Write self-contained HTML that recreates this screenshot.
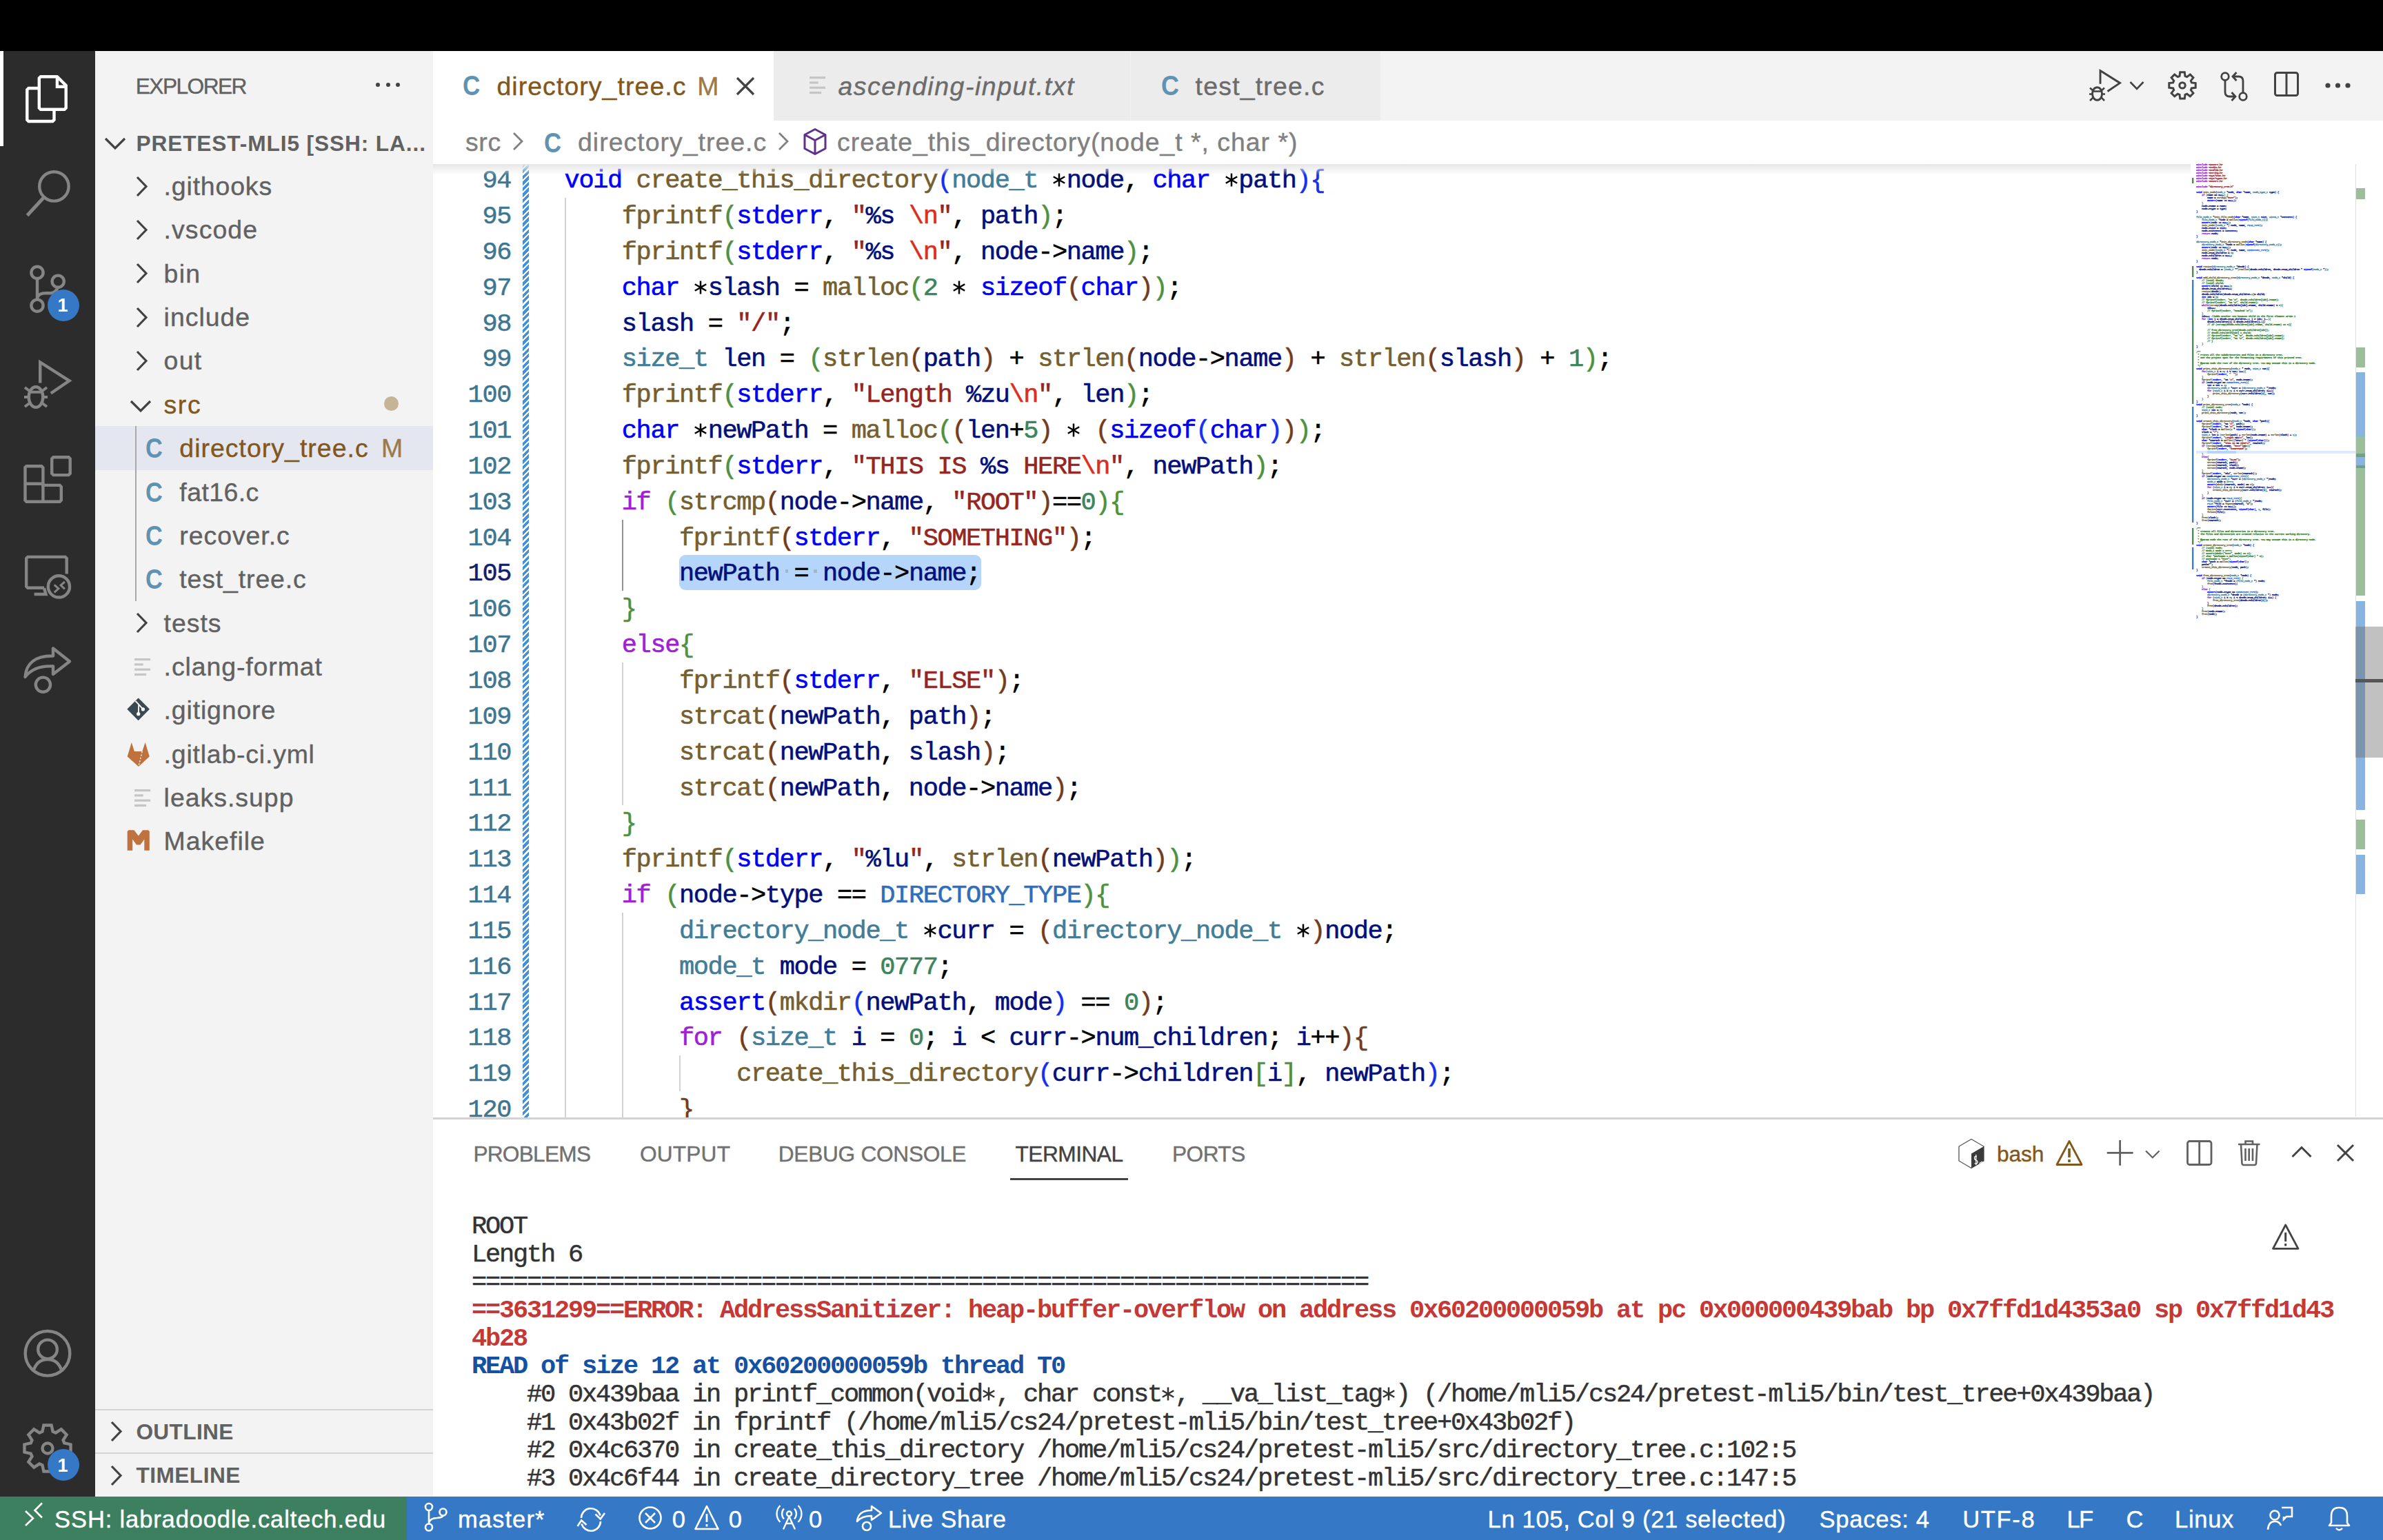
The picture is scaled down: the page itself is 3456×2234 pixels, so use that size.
<!DOCTYPE html><html><head><meta charset="utf-8"><style>html,body{margin:0;padding:0;width:3456px;height:2234px;overflow:hidden;background:#fff;position:relative}</style></head><body><div style="position:absolute;left:0.00px;top:0.00px;width:3456.00px;height:74.00px;background:#000;"></div><div style="position:absolute;left:0.00px;top:74.00px;width:138.00px;height:2097.00px;background:#2c2c2c;"></div><div style="position:absolute;left:0.00px;top:74.00px;width:5.00px;height:138.00px;background:#fff;"></div><div style="position:absolute;left:138.00px;top:74.00px;width:490.00px;height:2097.00px;background:#f3f3f3;"></div><div style="position:absolute;left:628.00px;top:74.00px;width:2828.00px;height:101.00px;background:#f3f3f3;"></div><div style="position:absolute;left:628.00px;top:175.00px;width:2828.00px;height:1447.00px;background:#fff;"></div><div style="position:absolute;left:628.00px;top:1622.00px;width:2828.00px;height:549.00px;background:#fff;"></div><div style="position:absolute;left:628.00px;top:1621.00px;width:2828.00px;height:3.00px;background:#d3d3d3;"></div><div style="position:absolute;left:0.00px;top:2171.00px;width:3456.00px;height:63.00px;background:#3478c6;"></div><div style="position:absolute;left:0.00px;top:2171.00px;width:590.00px;height:63.00px;background:#3d8060;"></div><div style="position:absolute;left:628px;top:238px;width:2828px;height:1383px;overflow:hidden"><div style="position:absolute;left:357.00px;top:566.94px;width:437.80px;height:51.34px;background:#b5d5fb;border-radius:9px"></div><div style="position:absolute;left:510.70px;top:588.44px;width:4.60px;height:4.60px;background:#9fb8d4;"></div><div style="position:absolute;left:552.30px;top:588.44px;width:4.60px;height:4.60px;background:#9fb8d4;"></div><div style="position:absolute;left:190.60px;top:49.14px;width:2.00px;height:1399.68px;background:#d3d3d3;"></div><div style="position:absolute;left:273.80px;top:515.70px;width:2.00px;height:103.68px;background:#939393;"></div><div style="position:absolute;left:273.80px;top:723.06px;width:2.00px;height:207.36px;background:#d3d3d3;"></div><div style="position:absolute;left:273.80px;top:1085.94px;width:2.00px;height:362.88px;background:#d3d3d3;"></div><div style="position:absolute;left:357.00px;top:1293.30px;width:2.00px;height:51.84px;background:#d3d3d3;"></div><div style="position:absolute;left:130.00px;top:0.00px;width:9.00px;height:1384.00px;background:repeating-linear-gradient(135deg,#4590d6 0px,#4590d6 3.7px,transparent 3.7px,transparent 6.08px);"></div><div style="position:absolute;left:-187.00px;top:6.25px;width:300px;text-align:right;font-family:'Liberation Mono', monospace;font-size:37.0px;line-height:37.0px;letter-spacing:-1.403px;color:#3d7690;white-space:pre;-webkit-text-stroke-width:0.5px">94</div><div style="position:absolute;left:190.60px;top:6.25px;font-family:'Liberation Mono', monospace;font-size:37.0px;line-height:37.0px;letter-spacing:-1.403px;white-space:pre;-webkit-text-stroke-width:0.6px"><span style="color:#0000f5">void</span> <span style="color:#755f30">create_this_directory</span><span style="color:#1330f0">(</span><span style="color:#417d96">node_t</span> <span style="position:relative;color:transparent">*<svg style="position:absolute;left:0.4px;top:9.8px;overflow:visible" width="20" height="20" viewBox="0 0 20 20"><path d="M10,0.5 L10,19.5 M1.8,5.25 L18.2,14.75 M1.8,14.75 L18.2,5.25" stroke="#000" stroke-width="2.5"/></svg></span><span style="color:#03107b">node</span><span style="color:#000000">,</span> <span style="color:#0000f5">char</span> <span style="position:relative;color:transparent">*<svg style="position:absolute;left:0.4px;top:9.8px;overflow:visible" width="20" height="20" viewBox="0 0 20 20"><path d="M10,0.5 L10,19.5 M1.8,5.25 L18.2,14.75 M1.8,14.75 L18.2,5.25" stroke="#000" stroke-width="2.5"/></svg></span><span style="color:#03107b">path</span><span style="color:#1330f0">)</span><span style="color:#1330f0">{</span></div><div style="position:absolute;left:-187.00px;top:58.09px;width:300px;text-align:right;font-family:'Liberation Mono', monospace;font-size:37.0px;line-height:37.0px;letter-spacing:-1.403px;color:#3d7690;white-space:pre;-webkit-text-stroke-width:0.5px">95</div><div style="position:absolute;left:190.60px;top:58.09px;font-family:'Liberation Mono', monospace;font-size:37.0px;line-height:37.0px;letter-spacing:-1.403px;white-space:pre;-webkit-text-stroke-width:0.6px">    <span style="color:#755f30">fprintf</span><span style="color:#4e913f">(</span><span style="color:#0000f5">stderr</span><span style="color:#000000">,</span> <span style="color:#95261f">&quot;</span><span style="color:#03107b">%s</span><span style="color:#95261f"> </span><span style="color:#da2f20">\n</span><span style="color:#95261f">&quot;</span><span style="color:#000000">,</span> <span style="color:#03107b">path</span><span style="color:#4e913f">)</span><span style="color:#000000">;</span></div><div style="position:absolute;left:-187.00px;top:109.93px;width:300px;text-align:right;font-family:'Liberation Mono', monospace;font-size:37.0px;line-height:37.0px;letter-spacing:-1.403px;color:#3d7690;white-space:pre;-webkit-text-stroke-width:0.5px">96</div><div style="position:absolute;left:190.60px;top:109.93px;font-family:'Liberation Mono', monospace;font-size:37.0px;line-height:37.0px;letter-spacing:-1.403px;white-space:pre;-webkit-text-stroke-width:0.6px">    <span style="color:#755f30">fprintf</span><span style="color:#4e913f">(</span><span style="color:#0000f5">stderr</span><span style="color:#000000">,</span> <span style="color:#95261f">&quot;</span><span style="color:#03107b">%s</span><span style="color:#95261f"> </span><span style="color:#da2f20">\n</span><span style="color:#95261f">&quot;</span><span style="color:#000000">,</span> <span style="color:#03107b">node</span><span style="color:#000000">-</span><span style="color:#000000">&gt;</span><span style="color:#03107b">name</span><span style="color:#4e913f">)</span><span style="color:#000000">;</span></div><div style="position:absolute;left:-187.00px;top:161.77px;width:300px;text-align:right;font-family:'Liberation Mono', monospace;font-size:37.0px;line-height:37.0px;letter-spacing:-1.403px;color:#3d7690;white-space:pre;-webkit-text-stroke-width:0.5px">97</div><div style="position:absolute;left:190.60px;top:161.77px;font-family:'Liberation Mono', monospace;font-size:37.0px;line-height:37.0px;letter-spacing:-1.403px;white-space:pre;-webkit-text-stroke-width:0.6px">    <span style="color:#0000f5">char</span> <span style="position:relative;color:transparent">*<svg style="position:absolute;left:0.4px;top:9.8px;overflow:visible" width="20" height="20" viewBox="0 0 20 20"><path d="M10,0.5 L10,19.5 M1.8,5.25 L18.2,14.75 M1.8,14.75 L18.2,5.25" stroke="#000" stroke-width="2.5"/></svg></span><span style="color:#03107b">slash</span> <span style="color:#000000">=</span> <span style="color:#755f30">malloc</span><span style="color:#4e913f">(</span><span style="color:#3c845c">2</span> <span style="position:relative;color:transparent">*<svg style="position:absolute;left:0.4px;top:9.8px;overflow:visible" width="20" height="20" viewBox="0 0 20 20"><path d="M10,0.5 L10,19.5 M1.8,5.25 L18.2,14.75 M1.8,14.75 L18.2,5.25" stroke="#000" stroke-width="2.5"/></svg></span> <span style="color:#0000f5">sizeof</span><span style="color:#733c1d">(</span><span style="color:#0000f5">char</span><span style="color:#733c1d">)</span><span style="color:#4e913f">)</span><span style="color:#000000">;</span></div><div style="position:absolute;left:-187.00px;top:213.61px;width:300px;text-align:right;font-family:'Liberation Mono', monospace;font-size:37.0px;line-height:37.0px;letter-spacing:-1.403px;color:#3d7690;white-space:pre;-webkit-text-stroke-width:0.5px">98</div><div style="position:absolute;left:190.60px;top:213.61px;font-family:'Liberation Mono', monospace;font-size:37.0px;line-height:37.0px;letter-spacing:-1.403px;white-space:pre;-webkit-text-stroke-width:0.6px">    <span style="color:#03107b">slash</span> <span style="color:#000000">=</span> <span style="color:#95261f">&quot;</span><span style="color:#95261f">/</span><span style="color:#95261f">&quot;</span><span style="color:#000000">;</span></div><div style="position:absolute;left:-187.00px;top:265.45px;width:300px;text-align:right;font-family:'Liberation Mono', monospace;font-size:37.0px;line-height:37.0px;letter-spacing:-1.403px;color:#3d7690;white-space:pre;-webkit-text-stroke-width:0.5px">99</div><div style="position:absolute;left:190.60px;top:265.45px;font-family:'Liberation Mono', monospace;font-size:37.0px;line-height:37.0px;letter-spacing:-1.403px;white-space:pre;-webkit-text-stroke-width:0.6px">    <span style="color:#417d96">size_t</span> <span style="color:#03107b">len</span> <span style="color:#000000">=</span> <span style="color:#4e913f">(</span><span style="color:#755f30">strlen</span><span style="color:#733c1d">(</span><span style="color:#03107b">path</span><span style="color:#733c1d">)</span> <span style="color:#000000">+</span> <span style="color:#755f30">strlen</span><span style="color:#733c1d">(</span><span style="color:#03107b">node</span><span style="color:#000000">-</span><span style="color:#000000">&gt;</span><span style="color:#03107b">name</span><span style="color:#733c1d">)</span> <span style="color:#000000">+</span> <span style="color:#755f30">strlen</span><span style="color:#733c1d">(</span><span style="color:#03107b">slash</span><span style="color:#733c1d">)</span> <span style="color:#000000">+</span> <span style="color:#3c845c">1</span><span style="color:#4e913f">)</span><span style="color:#000000">;</span></div><div style="position:absolute;left:-187.00px;top:317.29px;width:300px;text-align:right;font-family:'Liberation Mono', monospace;font-size:37.0px;line-height:37.0px;letter-spacing:-1.403px;color:#3d7690;white-space:pre;-webkit-text-stroke-width:0.5px">100</div><div style="position:absolute;left:190.60px;top:317.29px;font-family:'Liberation Mono', monospace;font-size:37.0px;line-height:37.0px;letter-spacing:-1.403px;white-space:pre;-webkit-text-stroke-width:0.6px">    <span style="color:#755f30">fprintf</span><span style="color:#4e913f">(</span><span style="color:#0000f5">stderr</span><span style="color:#000000">,</span> <span style="color:#95261f">&quot;</span><span style="color:#95261f">Length </span><span style="color:#03107b">%zu</span><span style="color:#da2f20">\n</span><span style="color:#95261f">&quot;</span><span style="color:#000000">,</span> <span style="color:#03107b">len</span><span style="color:#4e913f">)</span><span style="color:#000000">;</span></div><div style="position:absolute;left:-187.00px;top:369.13px;width:300px;text-align:right;font-family:'Liberation Mono', monospace;font-size:37.0px;line-height:37.0px;letter-spacing:-1.403px;color:#3d7690;white-space:pre;-webkit-text-stroke-width:0.5px">101</div><div style="position:absolute;left:190.60px;top:369.13px;font-family:'Liberation Mono', monospace;font-size:37.0px;line-height:37.0px;letter-spacing:-1.403px;white-space:pre;-webkit-text-stroke-width:0.6px">    <span style="color:#0000f5">char</span> <span style="position:relative;color:transparent">*<svg style="position:absolute;left:0.4px;top:9.8px;overflow:visible" width="20" height="20" viewBox="0 0 20 20"><path d="M10,0.5 L10,19.5 M1.8,5.25 L18.2,14.75 M1.8,14.75 L18.2,5.25" stroke="#000" stroke-width="2.5"/></svg></span><span style="color:#03107b">newPath</span> <span style="color:#000000">=</span> <span style="color:#755f30">malloc</span><span style="color:#4e913f">(</span><span style="color:#733c1d">(</span><span style="color:#03107b">len</span><span style="color:#000000">+</span><span style="color:#3c845c">5</span><span style="color:#733c1d">)</span> <span style="position:relative;color:transparent">*<svg style="position:absolute;left:0.4px;top:9.8px;overflow:visible" width="20" height="20" viewBox="0 0 20 20"><path d="M10,0.5 L10,19.5 M1.8,5.25 L18.2,14.75 M1.8,14.75 L18.2,5.25" stroke="#000" stroke-width="2.5"/></svg></span> <span style="color:#733c1d">(</span><span style="color:#0000f5">sizeof</span><span style="color:#1330f0">(</span><span style="color:#0000f5">char</span><span style="color:#1330f0">)</span><span style="color:#733c1d">)</span><span style="color:#4e913f">)</span><span style="color:#000000">;</span></div><div style="position:absolute;left:-187.00px;top:420.97px;width:300px;text-align:right;font-family:'Liberation Mono', monospace;font-size:37.0px;line-height:37.0px;letter-spacing:-1.403px;color:#3d7690;white-space:pre;-webkit-text-stroke-width:0.5px">102</div><div style="position:absolute;left:190.60px;top:420.97px;font-family:'Liberation Mono', monospace;font-size:37.0px;line-height:37.0px;letter-spacing:-1.403px;white-space:pre;-webkit-text-stroke-width:0.6px">    <span style="color:#755f30">fprintf</span><span style="color:#4e913f">(</span><span style="color:#0000f5">stderr</span><span style="color:#000000">,</span> <span style="color:#95261f">&quot;</span><span style="color:#95261f">THIS IS </span><span style="color:#03107b">%s</span><span style="color:#95261f"> HERE</span><span style="color:#da2f20">\n</span><span style="color:#95261f">&quot;</span><span style="color:#000000">,</span> <span style="color:#03107b">newPath</span><span style="color:#4e913f">)</span><span style="color:#000000">;</span></div><div style="position:absolute;left:-187.00px;top:472.81px;width:300px;text-align:right;font-family:'Liberation Mono', monospace;font-size:37.0px;line-height:37.0px;letter-spacing:-1.403px;color:#3d7690;white-space:pre;-webkit-text-stroke-width:0.5px">103</div><div style="position:absolute;left:190.60px;top:472.81px;font-family:'Liberation Mono', monospace;font-size:37.0px;line-height:37.0px;letter-spacing:-1.403px;white-space:pre;-webkit-text-stroke-width:0.6px">    <span style="color:#a020d3">if</span> <span style="color:#4e913f">(</span><span style="color:#755f30">strcmp</span><span style="color:#733c1d">(</span><span style="color:#03107b">node</span><span style="color:#000000">-</span><span style="color:#000000">&gt;</span><span style="color:#03107b">name</span><span style="color:#000000">,</span> <span style="color:#95261f">&quot;</span><span style="color:#95261f">ROOT</span><span style="color:#95261f">&quot;</span><span style="color:#733c1d">)</span><span style="color:#000000">=</span><span style="color:#000000">=</span><span style="color:#3c845c">0</span><span style="color:#4e913f">)</span><span style="color:#4e913f">{</span></div><div style="position:absolute;left:-187.00px;top:524.65px;width:300px;text-align:right;font-family:'Liberation Mono', monospace;font-size:37.0px;line-height:37.0px;letter-spacing:-1.403px;color:#3d7690;white-space:pre;-webkit-text-stroke-width:0.5px">104</div><div style="position:absolute;left:190.60px;top:524.65px;font-family:'Liberation Mono', monospace;font-size:37.0px;line-height:37.0px;letter-spacing:-1.403px;white-space:pre;-webkit-text-stroke-width:0.6px">        <span style="color:#755f30">fprintf</span><span style="color:#733c1d">(</span><span style="color:#0000f5">stderr</span><span style="color:#000000">,</span> <span style="color:#95261f">&quot;</span><span style="color:#95261f">SOMETHING</span><span style="color:#95261f">&quot;</span><span style="color:#733c1d">)</span><span style="color:#000000">;</span></div><div style="position:absolute;left:-187.00px;top:576.49px;width:300px;text-align:right;font-family:'Liberation Mono', monospace;font-size:37.0px;line-height:37.0px;letter-spacing:-1.403px;color:#11206b;white-space:pre;-webkit-text-stroke-width:0.5px">105</div><div style="position:absolute;left:190.60px;top:576.49px;font-family:'Liberation Mono', monospace;font-size:37.0px;line-height:37.0px;letter-spacing:-1.403px;white-space:pre;-webkit-text-stroke-width:0.6px">        <span style="color:#03107b">newPath</span> <span style="color:#000000">=</span> <span style="color:#03107b">node</span><span style="color:#000000">-</span><span style="color:#000000">&gt;</span><span style="color:#03107b">name</span><span style="color:#000000">;</span></div><div style="position:absolute;left:-187.00px;top:628.33px;width:300px;text-align:right;font-family:'Liberation Mono', monospace;font-size:37.0px;line-height:37.0px;letter-spacing:-1.403px;color:#3d7690;white-space:pre;-webkit-text-stroke-width:0.5px">106</div><div style="position:absolute;left:190.60px;top:628.33px;font-family:'Liberation Mono', monospace;font-size:37.0px;line-height:37.0px;letter-spacing:-1.403px;white-space:pre;-webkit-text-stroke-width:0.6px">    <span style="color:#4e913f">}</span></div><div style="position:absolute;left:-187.00px;top:680.17px;width:300px;text-align:right;font-family:'Liberation Mono', monospace;font-size:37.0px;line-height:37.0px;letter-spacing:-1.403px;color:#3d7690;white-space:pre;-webkit-text-stroke-width:0.5px">107</div><div style="position:absolute;left:190.60px;top:680.17px;font-family:'Liberation Mono', monospace;font-size:37.0px;line-height:37.0px;letter-spacing:-1.403px;white-space:pre;-webkit-text-stroke-width:0.6px">    <span style="color:#a020d3">else</span><span style="color:#4e913f">{</span></div><div style="position:absolute;left:-187.00px;top:732.01px;width:300px;text-align:right;font-family:'Liberation Mono', monospace;font-size:37.0px;line-height:37.0px;letter-spacing:-1.403px;color:#3d7690;white-space:pre;-webkit-text-stroke-width:0.5px">108</div><div style="position:absolute;left:190.60px;top:732.01px;font-family:'Liberation Mono', monospace;font-size:37.0px;line-height:37.0px;letter-spacing:-1.403px;white-space:pre;-webkit-text-stroke-width:0.6px">        <span style="color:#755f30">fprintf</span><span style="color:#733c1d">(</span><span style="color:#0000f5">stderr</span><span style="color:#000000">,</span> <span style="color:#95261f">&quot;</span><span style="color:#95261f">ELSE</span><span style="color:#95261f">&quot;</span><span style="color:#733c1d">)</span><span style="color:#000000">;</span></div><div style="position:absolute;left:-187.00px;top:783.85px;width:300px;text-align:right;font-family:'Liberation Mono', monospace;font-size:37.0px;line-height:37.0px;letter-spacing:-1.403px;color:#3d7690;white-space:pre;-webkit-text-stroke-width:0.5px">109</div><div style="position:absolute;left:190.60px;top:783.85px;font-family:'Liberation Mono', monospace;font-size:37.0px;line-height:37.0px;letter-spacing:-1.403px;white-space:pre;-webkit-text-stroke-width:0.6px">        <span style="color:#755f30">strcat</span><span style="color:#733c1d">(</span><span style="color:#03107b">newPath</span><span style="color:#000000">,</span> <span style="color:#03107b">path</span><span style="color:#733c1d">)</span><span style="color:#000000">;</span></div><div style="position:absolute;left:-187.00px;top:835.69px;width:300px;text-align:right;font-family:'Liberation Mono', monospace;font-size:37.0px;line-height:37.0px;letter-spacing:-1.403px;color:#3d7690;white-space:pre;-webkit-text-stroke-width:0.5px">110</div><div style="position:absolute;left:190.60px;top:835.69px;font-family:'Liberation Mono', monospace;font-size:37.0px;line-height:37.0px;letter-spacing:-1.403px;white-space:pre;-webkit-text-stroke-width:0.6px">        <span style="color:#755f30">strcat</span><span style="color:#733c1d">(</span><span style="color:#03107b">newPath</span><span style="color:#000000">,</span> <span style="color:#03107b">slash</span><span style="color:#733c1d">)</span><span style="color:#000000">;</span></div><div style="position:absolute;left:-187.00px;top:887.53px;width:300px;text-align:right;font-family:'Liberation Mono', monospace;font-size:37.0px;line-height:37.0px;letter-spacing:-1.403px;color:#3d7690;white-space:pre;-webkit-text-stroke-width:0.5px">111</div><div style="position:absolute;left:190.60px;top:887.53px;font-family:'Liberation Mono', monospace;font-size:37.0px;line-height:37.0px;letter-spacing:-1.403px;white-space:pre;-webkit-text-stroke-width:0.6px">        <span style="color:#755f30">strcat</span><span style="color:#733c1d">(</span><span style="color:#03107b">newPath</span><span style="color:#000000">,</span> <span style="color:#03107b">node</span><span style="color:#000000">-</span><span style="color:#000000">&gt;</span><span style="color:#03107b">name</span><span style="color:#733c1d">)</span><span style="color:#000000">;</span></div><div style="position:absolute;left:-187.00px;top:939.37px;width:300px;text-align:right;font-family:'Liberation Mono', monospace;font-size:37.0px;line-height:37.0px;letter-spacing:-1.403px;color:#3d7690;white-space:pre;-webkit-text-stroke-width:0.5px">112</div><div style="position:absolute;left:190.60px;top:939.37px;font-family:'Liberation Mono', monospace;font-size:37.0px;line-height:37.0px;letter-spacing:-1.403px;white-space:pre;-webkit-text-stroke-width:0.6px">    <span style="color:#4e913f">}</span></div><div style="position:absolute;left:-187.00px;top:991.21px;width:300px;text-align:right;font-family:'Liberation Mono', monospace;font-size:37.0px;line-height:37.0px;letter-spacing:-1.403px;color:#3d7690;white-space:pre;-webkit-text-stroke-width:0.5px">113</div><div style="position:absolute;left:190.60px;top:991.21px;font-family:'Liberation Mono', monospace;font-size:37.0px;line-height:37.0px;letter-spacing:-1.403px;white-space:pre;-webkit-text-stroke-width:0.6px">    <span style="color:#755f30">fprintf</span><span style="color:#4e913f">(</span><span style="color:#0000f5">stderr</span><span style="color:#000000">,</span> <span style="color:#95261f">&quot;</span><span style="color:#03107b">%lu</span><span style="color:#95261f">&quot;</span><span style="color:#000000">,</span> <span style="color:#755f30">strlen</span><span style="color:#733c1d">(</span><span style="color:#03107b">newPath</span><span style="color:#733c1d">)</span><span style="color:#4e913f">)</span><span style="color:#000000">;</span></div><div style="position:absolute;left:-187.00px;top:1043.05px;width:300px;text-align:right;font-family:'Liberation Mono', monospace;font-size:37.0px;line-height:37.0px;letter-spacing:-1.403px;color:#3d7690;white-space:pre;-webkit-text-stroke-width:0.5px">114</div><div style="position:absolute;left:190.60px;top:1043.05px;font-family:'Liberation Mono', monospace;font-size:37.0px;line-height:37.0px;letter-spacing:-1.403px;white-space:pre;-webkit-text-stroke-width:0.6px">    <span style="color:#a020d3">if</span> <span style="color:#4e913f">(</span><span style="color:#03107b">node</span><span style="color:#000000">-</span><span style="color:#000000">&gt;</span><span style="color:#03107b">type</span> <span style="color:#000000">=</span><span style="color:#000000">=</span> <span style="color:#2f6ebb">DIRECTORY_TYPE</span><span style="color:#4e913f">)</span><span style="color:#4e913f">{</span></div><div style="position:absolute;left:-187.00px;top:1094.89px;width:300px;text-align:right;font-family:'Liberation Mono', monospace;font-size:37.0px;line-height:37.0px;letter-spacing:-1.403px;color:#3d7690;white-space:pre;-webkit-text-stroke-width:0.5px">115</div><div style="position:absolute;left:190.60px;top:1094.89px;font-family:'Liberation Mono', monospace;font-size:37.0px;line-height:37.0px;letter-spacing:-1.403px;white-space:pre;-webkit-text-stroke-width:0.6px">        <span style="color:#417d96">directory_node_t</span> <span style="position:relative;color:transparent">*<svg style="position:absolute;left:0.4px;top:9.8px;overflow:visible" width="20" height="20" viewBox="0 0 20 20"><path d="M10,0.5 L10,19.5 M1.8,5.25 L18.2,14.75 M1.8,14.75 L18.2,5.25" stroke="#000" stroke-width="2.5"/></svg></span><span style="color:#03107b">curr</span> <span style="color:#000000">=</span> <span style="color:#733c1d">(</span><span style="color:#417d96">directory_node_t</span> <span style="position:relative;color:transparent">*<svg style="position:absolute;left:0.4px;top:9.8px;overflow:visible" width="20" height="20" viewBox="0 0 20 20"><path d="M10,0.5 L10,19.5 M1.8,5.25 L18.2,14.75 M1.8,14.75 L18.2,5.25" stroke="#000" stroke-width="2.5"/></svg></span><span style="color:#733c1d">)</span><span style="color:#03107b">node</span><span style="color:#000000">;</span></div><div style="position:absolute;left:-187.00px;top:1146.73px;width:300px;text-align:right;font-family:'Liberation Mono', monospace;font-size:37.0px;line-height:37.0px;letter-spacing:-1.403px;color:#3d7690;white-space:pre;-webkit-text-stroke-width:0.5px">116</div><div style="position:absolute;left:190.60px;top:1146.73px;font-family:'Liberation Mono', monospace;font-size:37.0px;line-height:37.0px;letter-spacing:-1.403px;white-space:pre;-webkit-text-stroke-width:0.6px">        <span style="color:#417d96">mode_t</span> <span style="color:#03107b">mode</span> <span style="color:#000000">=</span> <span style="color:#3c845c">0777</span><span style="color:#000000">;</span></div><div style="position:absolute;left:-187.00px;top:1198.57px;width:300px;text-align:right;font-family:'Liberation Mono', monospace;font-size:37.0px;line-height:37.0px;letter-spacing:-1.403px;color:#3d7690;white-space:pre;-webkit-text-stroke-width:0.5px">117</div><div style="position:absolute;left:190.60px;top:1198.57px;font-family:'Liberation Mono', monospace;font-size:37.0px;line-height:37.0px;letter-spacing:-1.403px;white-space:pre;-webkit-text-stroke-width:0.6px">        <span style="color:#0000f5">assert</span><span style="color:#733c1d">(</span><span style="color:#755f30">mkdir</span><span style="color:#1330f0">(</span><span style="color:#03107b">newPath</span><span style="color:#000000">,</span> <span style="color:#03107b">mode</span><span style="color:#1330f0">)</span> <span style="color:#000000">=</span><span style="color:#000000">=</span> <span style="color:#3c845c">0</span><span style="color:#733c1d">)</span><span style="color:#000000">;</span></div><div style="position:absolute;left:-187.00px;top:1250.41px;width:300px;text-align:right;font-family:'Liberation Mono', monospace;font-size:37.0px;line-height:37.0px;letter-spacing:-1.403px;color:#3d7690;white-space:pre;-webkit-text-stroke-width:0.5px">118</div><div style="position:absolute;left:190.60px;top:1250.41px;font-family:'Liberation Mono', monospace;font-size:37.0px;line-height:37.0px;letter-spacing:-1.403px;white-space:pre;-webkit-text-stroke-width:0.6px">        <span style="color:#a020d3">for</span> <span style="color:#733c1d">(</span><span style="color:#417d96">size_t</span> <span style="color:#03107b">i</span> <span style="color:#000000">=</span> <span style="color:#3c845c">0</span><span style="color:#000000">;</span> <span style="color:#03107b">i</span> <span style="color:#000000">&lt;</span> <span style="color:#03107b">curr</span><span style="color:#000000">-</span><span style="color:#000000">&gt;</span><span style="color:#03107b">num_children</span><span style="color:#000000">;</span> <span style="color:#03107b">i</span><span style="color:#000000">+</span><span style="color:#000000">+</span><span style="color:#733c1d">)</span><span style="color:#733c1d">{</span></div><div style="position:absolute;left:-187.00px;top:1302.25px;width:300px;text-align:right;font-family:'Liberation Mono', monospace;font-size:37.0px;line-height:37.0px;letter-spacing:-1.403px;color:#3d7690;white-space:pre;-webkit-text-stroke-width:0.5px">119</div><div style="position:absolute;left:190.60px;top:1302.25px;font-family:'Liberation Mono', monospace;font-size:37.0px;line-height:37.0px;letter-spacing:-1.403px;white-space:pre;-webkit-text-stroke-width:0.6px">            <span style="color:#755f30">create_this_directory</span><span style="color:#1330f0">(</span><span style="color:#03107b">curr</span><span style="color:#000000">-</span><span style="color:#000000">&gt;</span><span style="color:#03107b">children</span><span style="color:#4e913f">[</span><span style="color:#03107b">i</span><span style="color:#4e913f">]</span><span style="color:#000000">,</span> <span style="color:#03107b">newPath</span><span style="color:#1330f0">)</span><span style="color:#000000">;</span></div><div style="position:absolute;left:-187.00px;top:1354.09px;width:300px;text-align:right;font-family:'Liberation Mono', monospace;font-size:37.0px;line-height:37.0px;letter-spacing:-1.403px;color:#3d7690;white-space:pre;-webkit-text-stroke-width:0.5px">120</div><div style="position:absolute;left:190.60px;top:1354.09px;font-family:'Liberation Mono', monospace;font-size:37.0px;line-height:37.0px;letter-spacing:-1.403px;white-space:pre;-webkit-text-stroke-width:0.6px">        <span style="color:#733c1d">}</span></div></div><div style="position:absolute;left:628.00px;top:238.00px;width:2549.00px;height:16.00px;background:linear-gradient(#e6e6e6, rgba(255,255,255,0));"></div><div style="position:absolute;left:196.80px;top:110.31px;font-family:'Liberation Sans', sans-serif;font-size:31.68px;line-height:31.68px;color:#616161;font-weight:400;font-style:normal;white-space:pre;-webkit-text-stroke-width:0.4px;letter-spacing:-1.557px;">EXPLORER</div><div style="position:absolute;left:545.00px;top:119.50px;width:6.00px;height:6.00px;background:#424242;border-radius:50%"></div><div style="position:absolute;left:559.50px;top:119.50px;width:6.00px;height:6.00px;background:#424242;border-radius:50%"></div><div style="position:absolute;left:574.00px;top:119.50px;width:6.00px;height:6.00px;background:#424242;border-radius:50%"></div><svg style="position:absolute;left:148.80px;top:195.80px;" width="36.00" height="24.00" viewBox="0 0 36 24"><path d="M4 5 L18 19 L32 5" fill="none" stroke="#424242" stroke-width="3.2"/></svg><div style="position:absolute;left:197.40px;top:192.61px;font-family:'Liberation Sans', sans-serif;font-size:31.68px;line-height:31.68px;color:#616161;font-weight:700;font-style:normal;white-space:pre;letter-spacing:0.876px;">PRETEST-MLI5 [SSH: LA...</div><div style="position:absolute;left:138.00px;top:618.36px;width:490.00px;height:63.36px;background:#e4e6f0;"></div><div style="position:absolute;left:196.30px;top:618.36px;width:2.00px;height:253.44px;background:#a9a9a9;"></div><svg style="position:absolute;left:194.30px;top:252.50px;" width="24.00" height="35.00" viewBox="0 0 24 35"><path d="M5 4 L18 17.5 L5 31" fill="none" stroke="#424242" stroke-width="3.2"/></svg><div style="position:absolute;left:237.60px;top:252.02px;font-family:'Liberation Sans', sans-serif;font-size:37.44px;line-height:37.44px;color:#616161;font-weight:400;font-style:normal;white-space:pre;-webkit-text-stroke-width:0.4px;letter-spacing:0.840px;">.githooks</div><svg style="position:absolute;left:194.30px;top:315.86px;" width="24.00" height="35.00" viewBox="0 0 24 35"><path d="M5 4 L18 17.5 L5 31" fill="none" stroke="#424242" stroke-width="3.2"/></svg><div style="position:absolute;left:237.60px;top:315.38px;font-family:'Liberation Sans', sans-serif;font-size:37.44px;line-height:37.44px;color:#616161;font-weight:400;font-style:normal;white-space:pre;-webkit-text-stroke-width:0.4px;letter-spacing:1.075px;">.vscode</div><svg style="position:absolute;left:194.30px;top:379.22px;" width="24.00" height="35.00" viewBox="0 0 24 35"><path d="M5 4 L18 17.5 L5 31" fill="none" stroke="#424242" stroke-width="3.2"/></svg><div style="position:absolute;left:237.60px;top:378.74px;font-family:'Liberation Sans', sans-serif;font-size:37.44px;line-height:37.44px;color:#616161;font-weight:400;font-style:normal;white-space:pre;-webkit-text-stroke-width:0.4px;letter-spacing:1.249px;">bin</div><svg style="position:absolute;left:194.30px;top:442.58px;" width="24.00" height="35.00" viewBox="0 0 24 35"><path d="M5 4 L18 17.5 L5 31" fill="none" stroke="#424242" stroke-width="3.2"/></svg><div style="position:absolute;left:237.60px;top:442.10px;font-family:'Liberation Sans', sans-serif;font-size:37.44px;line-height:37.44px;color:#616161;font-weight:400;font-style:normal;white-space:pre;-webkit-text-stroke-width:0.4px;letter-spacing:0.988px;">include</div><svg style="position:absolute;left:194.30px;top:505.94px;" width="24.00" height="35.00" viewBox="0 0 24 35"><path d="M5 4 L18 17.5 L5 31" fill="none" stroke="#424242" stroke-width="3.2"/></svg><div style="position:absolute;left:237.60px;top:505.46px;font-family:'Liberation Sans', sans-serif;font-size:37.44px;line-height:37.44px;color:#616161;font-weight:400;font-style:normal;white-space:pre;-webkit-text-stroke-width:0.4px;letter-spacing:1.301px;">out</div><svg style="position:absolute;left:186.40px;top:576.60px;" width="36.00" height="24.00" viewBox="0 0 36 24"><path d="M4 5 L18 19 L32 5" fill="none" stroke="#424242" stroke-width="3.2"/></svg><div style="position:absolute;left:237.60px;top:568.82px;font-family:'Liberation Sans', sans-serif;font-size:37.44px;line-height:37.44px;color:#82571c;font-weight:400;font-style:normal;white-space:pre;-webkit-text-stroke-width:0.4px;letter-spacing:1.555px;">src</div><div style="position:absolute;left:211.40px;top:630.36px;font-family:'Liberation Sans', sans-serif;font-size:40px;line-height:40px;color:#5f93b3;font-weight:700;font-style:normal;white-space:pre;transform:scaleX(0.86);transform-origin:0 0;">C</div><div style="position:absolute;left:260.30px;top:632.18px;font-family:'Liberation Sans', sans-serif;font-size:37.44px;line-height:37.44px;color:#82571c;font-weight:400;font-style:normal;white-space:pre;-webkit-text-stroke-width:0.4px;letter-spacing:1.033px;">directory_tree.c</div><div style="position:absolute;left:211.40px;top:693.72px;font-family:'Liberation Sans', sans-serif;font-size:40px;line-height:40px;color:#5f93b3;font-weight:700;font-style:normal;white-space:pre;transform:scaleX(0.86);transform-origin:0 0;">C</div><div style="position:absolute;left:260.30px;top:695.54px;font-family:'Liberation Sans', sans-serif;font-size:37.44px;line-height:37.44px;color:#616161;font-weight:400;font-style:normal;white-space:pre;-webkit-text-stroke-width:0.4px;letter-spacing:0.443px;">fat16.c</div><div style="position:absolute;left:211.40px;top:757.08px;font-family:'Liberation Sans', sans-serif;font-size:40px;line-height:40px;color:#5f93b3;font-weight:700;font-style:normal;white-space:pre;transform:scaleX(0.86);transform-origin:0 0;">C</div><div style="position:absolute;left:260.30px;top:758.90px;font-family:'Liberation Sans', sans-serif;font-size:37.44px;line-height:37.44px;color:#616161;font-weight:400;font-style:normal;white-space:pre;-webkit-text-stroke-width:0.4px;letter-spacing:0.949px;">recover.c</div><div style="position:absolute;left:211.40px;top:820.44px;font-family:'Liberation Sans', sans-serif;font-size:40px;line-height:40px;color:#5f93b3;font-weight:700;font-style:normal;white-space:pre;transform:scaleX(0.86);transform-origin:0 0;">C</div><div style="position:absolute;left:260.30px;top:822.26px;font-family:'Liberation Sans', sans-serif;font-size:37.44px;line-height:37.44px;color:#616161;font-weight:400;font-style:normal;white-space:pre;-webkit-text-stroke-width:0.4px;letter-spacing:0.874px;">test_tree.c</div><svg style="position:absolute;left:194.30px;top:886.10px;" width="24.00" height="35.00" viewBox="0 0 24 35"><path d="M5 4 L18 17.5 L5 31" fill="none" stroke="#424242" stroke-width="3.2"/></svg><div style="position:absolute;left:237.60px;top:885.62px;font-family:'Liberation Sans', sans-serif;font-size:37.44px;line-height:37.44px;color:#616161;font-weight:400;font-style:normal;white-space:pre;-webkit-text-stroke-width:0.4px;letter-spacing:0.988px;">tests</div><svg style="position:absolute;left:195.00px;top:955.16px;" width="24.00" height="26.00" viewBox="0 0 24 26"><rect x="0" y="0.0" width="23.1" height="3.2" fill="#c5c5c5"/><rect x="0" y="7.3" width="12.7" height="3.2" fill="#c5c5c5"/><rect x="0" y="14.6" width="23.1" height="3.2" fill="#c5c5c5"/><rect x="0" y="21.9" width="17.1" height="3.2" fill="#c5c5c5"/></svg><div style="position:absolute;left:237.60px;top:948.98px;font-family:'Liberation Sans', sans-serif;font-size:37.44px;line-height:37.44px;color:#616161;font-weight:400;font-style:normal;white-space:pre;-webkit-text-stroke-width:0.4px;letter-spacing:0.910px;">.clang-format</div><svg style="position:absolute;left:0.00px;top:0.00px;" width="240.00" height="2234.00" viewBox="0 0 240 2234"><path d="M200.6,1013.5 L215.9,1028.8 L200.6,1044.1 L185.3,1028.8 Z" fill="#3b4a52" stroke="#3b4a52" stroke-width="1.5" stroke-linejoin="round"/><path d="M196.5,1017 L201.2,1021.8 L200.8,1035.5 M201.2,1021.8 L207.4,1028.9" fill="none" stroke="#fff" stroke-width="1.8"/><circle cx="200.7" cy="1035.7" r="2.6" fill="#fff"/><circle cx="207.4" cy="1028.9" r="2.6" fill="#fff"/></svg><div style="position:absolute;left:237.60px;top:1012.34px;font-family:'Liberation Sans', sans-serif;font-size:37.44px;line-height:37.44px;color:#616161;font-weight:400;font-style:normal;white-space:pre;-webkit-text-stroke-width:0.4px;letter-spacing:0.855px;">.gitignore</div><svg style="position:absolute;left:0.00px;top:0.00px;" width="240.00" height="2234.00" viewBox="0 0 240 2234"><path d="M184.7,1097.4 L190.8,1077 L194.9,1090 L206.3,1090 L210.6,1077 L216.8,1097.4 L200.9,1112 Z" fill="#bf723d"/><path d="M206.3,1090 L200.9,1112" stroke="#fff" stroke-width="1.2" stroke-dasharray="2.5,2"/></svg><div style="position:absolute;left:237.60px;top:1075.70px;font-family:'Liberation Sans', sans-serif;font-size:37.44px;line-height:37.44px;color:#616161;font-weight:400;font-style:normal;white-space:pre;-webkit-text-stroke-width:0.4px;letter-spacing:0.800px;">.gitlab-ci.yml</div><svg style="position:absolute;left:195.00px;top:1145.24px;" width="24.00" height="26.00" viewBox="0 0 24 26"><rect x="0" y="0.0" width="23.1" height="3.2" fill="#c5c5c5"/><rect x="0" y="7.3" width="12.7" height="3.2" fill="#c5c5c5"/><rect x="0" y="14.6" width="23.1" height="3.2" fill="#c5c5c5"/><rect x="0" y="21.9" width="17.1" height="3.2" fill="#c5c5c5"/></svg><div style="position:absolute;left:237.60px;top:1139.06px;font-family:'Liberation Sans', sans-serif;font-size:37.44px;line-height:37.44px;color:#616161;font-weight:400;font-style:normal;white-space:pre;-webkit-text-stroke-width:0.4px;letter-spacing:0.994px;">leaks.supp</div><svg style="position:absolute;left:0.00px;top:0.00px;" width="240.00" height="2234.00" viewBox="0 0 240 2234"><path d="M184.7,1233.8 L184.7,1206 L186.5,1204.2 L194.5,1204.2 L200.8,1212.5 L207,1204.2 L215,1204.2 L216.8,1206 L216.8,1233.8 L209.3,1233.8 L209.3,1217.5 L203.5,1225.5 L198,1225.5 L192.2,1217.5 L192.2,1233.8 Z" fill="#bf723d"/></svg><div style="position:absolute;left:237.60px;top:1202.42px;font-family:'Liberation Sans', sans-serif;font-size:37.44px;line-height:37.44px;color:#616161;font-weight:400;font-style:normal;white-space:pre;-webkit-text-stroke-width:0.4px;letter-spacing:0.995px;">Makefile</div><div style="position:absolute;left:556.90px;top:575.30px;width:21.00px;height:21.00px;background:#c5b596;border-radius:50%"></div><div style="position:absolute;left:552.90px;top:631.68px;font-family:'Liberation Sans', sans-serif;font-size:37.44px;line-height:37.44px;color:#9c7a48;font-weight:400;font-style:normal;white-space:pre;-webkit-text-stroke-width:0.4px;letter-spacing:-4.488px;">M</div><div style="position:absolute;left:138.00px;top:2044.30px;width:490.00px;height:2.00px;background:#d4d4d4;"></div><div style="position:absolute;left:138.00px;top:2107.40px;width:490.00px;height:2.00px;background:#d4d4d4;"></div><svg style="position:absolute;left:157.00px;top:2059.00px;" width="24.00" height="35.00" viewBox="0 0 24 35"><path d="M5 4 L18 17.5 L5 31" fill="none" stroke="#424242" stroke-width="3.2"/></svg><div style="position:absolute;left:197.40px;top:2061.91px;font-family:'Liberation Sans', sans-serif;font-size:31.68px;line-height:31.68px;color:#616161;font-weight:700;font-style:normal;white-space:pre;letter-spacing:0.333px;">OUTLINE</div><svg style="position:absolute;left:157.00px;top:2122.50px;" width="24.00" height="35.00" viewBox="0 0 24 35"><path d="M5 4 L18 17.5 L5 31" fill="none" stroke="#424242" stroke-width="3.2"/></svg><div style="position:absolute;left:197.40px;top:2125.41px;font-family:'Liberation Sans', sans-serif;font-size:31.68px;line-height:31.68px;color:#616161;font-weight:700;font-style:normal;white-space:pre;letter-spacing:0.455px;">TIMELINE</div><svg style="position:absolute;left:0.00px;top:0.00px;" width="138.00" height="2234.00" viewBox="0 0 138 2234"><path d="M56.8,113.4 L59,111.2 L82.9,111.2 L95.7,124 L95.7,156.5 L93.5,158.7 L59,158.7 L56.8,156.5 Z" fill="none" stroke="#ffffff" stroke-width="4.4" stroke-linejoin="miter"/><path d="M82.9,111.2 L82.9,125.8 L95.7,125.8" fill="none" stroke="#ffffff" stroke-width="4.4"/><path d="M56.8,128 L41.5,128 L39.3,130.2 L39.3,173.8 L41.5,176 L76.3,176 L78.5,173.8 L78.5,158.7" fill="none" stroke="#ffffff" stroke-width="4.4"/><circle cx="78.4" cy="270.4" r="21.2" fill="none" stroke="#858585" stroke-width="4.4"/><path d="M63.5,286.5 L39.5,312.5" stroke="#858585" stroke-width="5.0"/><circle cx="54" cy="395.4" r="8.6" fill="none" stroke="#858585" stroke-width="4.4"/><circle cx="84.2" cy="408.2" r="8.6" fill="none" stroke="#858585" stroke-width="4.4"/><circle cx="54" cy="443.2" r="8.6" fill="none" stroke="#858585" stroke-width="4.4"/><path d="M54,404 L54,434.6" stroke="#858585" stroke-width="4.4"/><path d="M54,432 Q56,425.3 66,425.3 L73.8,425.3 Q80,425.3 84.2,416.8" fill="none" stroke="#858585" stroke-width="4.4"/><path d="M58.2,555.4 L58.2,525.5 L100.5,552.3 L73.8,570.5" fill="none" stroke="#858585" stroke-width="4.4"/><ellipse cx="52" cy="576" rx="10.3" ry="14.8" fill="none" stroke="#858585" stroke-width="4.4"/><path d="M41,568.7 L63,568.7 M35,576 L41.5,576 M62.5,576 L69,576 M36,562 L42.5,567 M68,562 L61.5,567 M36,590 L42.5,585 M68,590 L61.5,585" stroke="#858585" stroke-width="4.0"/><path d="M36.5,678 L38.5,676.2 L60.2,676.2 L62.4,678.4 L62.4,703.9 L86.6,703.9 L88.8,706.1 L88.8,725.6 L86.6,727.8 L38.5,727.8 L36.5,725.8 Z" fill="none" stroke="#858585" stroke-width="4.4"/><path d="M36.5,701.7 L62.4,701.7 M62.4,701.7 L62.4,727.8" stroke="#858585" stroke-width="4.4"/><path d="M77.4,663.2 L99.5,663.2 L101.7,665.4 L101.7,686.9 L99.5,689.1 L77.4,689.1 L75.2,686.9 L75.2,665.4 Z" fill="none" stroke="#858585" stroke-width="4.4"/><path d="M64,852.8 L40.2,852.8 L38.2,850.8 L38.2,809.9 L40.2,807.9 L94.7,807.9 L96.7,809.9 L96.7,832.5" fill="none" stroke="#858585" stroke-width="4.4"/><path d="M49.6,862 L66.5,862 L64,853" fill="none" stroke="#858585" stroke-width="4.4"/><circle cx="85.4" cy="850.9" r="15.6" fill="none" stroke="#858585" stroke-width="4.4"/><path d="M78.7,848.4 L84.9,853.8 L78.7,859.4 M93.9,844 L88.1,849 L93.9,854.3" fill="none" stroke="#858585" stroke-width="3"/><path d="M36.5,982 C38,962 52,951 77,951.5 L77,940.5 L101,959.4 L77,978 L77,966.5 C58,965.5 45,971 36.5,982 Z" fill="none" stroke="#858585" stroke-width="4.4" stroke-linejoin="round"/><circle cx="62.4" cy="993.2" r="10.6" fill="none" stroke="#858585" stroke-width="4.4"/><circle cx="69" cy="1963.3" r="32.3" fill="none" stroke="#858585" stroke-width="4.4"/><circle cx="69" cy="1957.4" r="13.8" fill="none" stroke="#858585" stroke-width="4.4"/><path d="M48,1990 C52,1976 60,1972 69,1972 C78,1972 86,1976 90,1990" fill="none" stroke="#858585" stroke-width="4.4"/><path d="M93.34,2093.41 L102.54,2095.42 L102.54,2106.58 L93.34,2108.59 L91.58,2112.84 L96.66,2120.77 L88.77,2128.66 L80.84,2123.58 L76.59,2125.34 L74.58,2134.54 L63.42,2134.54 L61.41,2125.34 L57.16,2123.58 L49.23,2128.66 L41.34,2120.77 L46.42,2112.84 L44.66,2108.59 L35.46,2106.58 L35.46,2095.42 L44.66,2093.41 L46.42,2089.16 L41.34,2081.23 L49.23,2073.34 L57.16,2078.42 L61.41,2076.66 L63.42,2067.46 L74.58,2067.46 L76.59,2076.66 L80.84,2078.42 L88.77,2073.34 L96.66,2081.23 L91.58,2089.16 Z" fill="none" stroke="#858585" stroke-width="4.4" stroke-linejoin="miter"/><circle cx="69" cy="2101" r="7.5" fill="none" stroke="#858585" stroke-width="4.4"/></svg><div style="position:absolute;left:69.00px;top:419.90px;width:46.00px;height:46.00px;background:#3478c6;border-radius:50%"></div><div style="position:absolute;left:83.50px;top:430.09px;font-family:'Liberation Sans', sans-serif;font-size:27px;line-height:27px;color:#fff;font-weight:700;font-style:normal;white-space:pre;">1</div><div style="position:absolute;left:69.00px;top:2102.30px;width:46.00px;height:46.00px;background:#3478c6;border-radius:50%"></div><div style="position:absolute;left:83.50px;top:2112.59px;font-family:'Liberation Sans', sans-serif;font-size:27px;line-height:27px;color:#fff;font-weight:700;font-style:normal;white-space:pre;">1</div><div style="position:absolute;left:628.00px;top:74.00px;width:494.00px;height:101.00px;background:#ffffff;"></div><div style="position:absolute;left:1122.00px;top:74.00px;width:517.00px;height:101.00px;background:#ececec;"></div><div style="position:absolute;left:1640.00px;top:74.00px;width:362.00px;height:101.00px;background:#ececec;"></div><div style="position:absolute;left:1639.00px;top:74.00px;width:1.00px;height:101.00px;background:#f3f3f3;"></div><div style="position:absolute;left:671.00px;top:104.00px;font-family:'Liberation Sans', sans-serif;font-size:40px;line-height:40px;color:#5f93b3;font-weight:700;font-style:normal;white-space:pre;transform:scaleX(0.88);transform-origin:0 0;">C</div><div style="position:absolute;left:720.40px;top:106.92px;font-family:'Liberation Sans', sans-serif;font-size:37.44px;line-height:37.44px;color:#82571c;font-weight:400;font-style:normal;white-space:pre;-webkit-text-stroke-width:0.4px;letter-spacing:1.080px;">directory_tree.c</div><div style="position:absolute;left:1011.30px;top:106.92px;font-family:'Liberation Sans', sans-serif;font-size:37.44px;line-height:37.44px;color:#9c7a48;font-weight:400;font-style:normal;white-space:pre;-webkit-text-stroke-width:0.4px;letter-spacing:-4.188px;">M</div><svg style="position:absolute;left:1066.00px;top:110.00px;" width="30.00" height="30.00" viewBox="0 0 30 30"><path d="M3,3 L27,27 M27,3 L3,27" stroke="#424242" stroke-width="3.2"/></svg><svg style="position:absolute;left:1174.30px;top:111.40px;" width="24.00" height="26.00" viewBox="0 0 24 26"><rect x="0" y="0.0" width="23.1" height="3.2" fill="#c5c5c5"/><rect x="0" y="7.3" width="12.7" height="3.2" fill="#c5c5c5"/><rect x="0" y="14.6" width="23.1" height="3.2" fill="#c5c5c5"/><rect x="0" y="21.9" width="17.1" height="3.2" fill="#c5c5c5"/></svg><div style="position:absolute;left:1215.40px;top:106.92px;font-family:'Liberation Sans', sans-serif;font-size:37.44px;line-height:37.44px;color:#6b6b6b;font-weight:400;font-style:italic;white-space:pre;-webkit-text-stroke-width:0.4px;letter-spacing:1.549px;">ascending-input.txt</div><div style="position:absolute;left:1683.50px;top:104.00px;font-family:'Liberation Sans', sans-serif;font-size:40px;line-height:40px;color:#5f93b3;font-weight:700;font-style:normal;white-space:pre;transform:scaleX(0.9);transform-origin:0 0;">C</div><div style="position:absolute;left:1733.60px;top:106.92px;font-family:'Liberation Sans', sans-serif;font-size:37.44px;line-height:37.44px;color:#6b6b6b;font-weight:400;font-style:normal;white-space:pre;-webkit-text-stroke-width:0.4px;letter-spacing:1.207px;">test_tree.c</div><svg style="position:absolute;left:0.00px;top:0.00px;pointer-events:none" width="3456.00" height="240.00" viewBox="0 0 3456 240"><path d="M3046,121.7 L3046,102.5 L3074.5,120.4 L3056.5,132.5" fill="none" stroke="#424242" stroke-width="2.9"/><ellipse cx="3041.5" cy="136" rx="7" ry="9.3" fill="none" stroke="#424242" stroke-width="2.9"/><path d="M3031,127.5 L3035.5,131.5 M3052,127.5 L3047.5,131.5 M3031,146 L3035.5,141.5 M3052,146 L3047.5,141.5 M3030,136.5 L3034.5,136.5 M3048.5,136.5 L3053,136.5 M3034.5,132.5 L3048.5,132.5" stroke="#424242" stroke-width="2.6"/><path d="M3089.5,119 L3099,128.8 L3108.5,119" fill="none" stroke="#424242" stroke-width="2.6"/><path d="M3161.0,110.5 L3161.7,104.7 L3168.3,104.7 L3169.0,110.5 L3171.7,111.6 L3176.3,108.0 L3180.9,112.6 L3177.3,117.2 L3178.4,119.9 L3184.2,120.6 L3184.2,127.2 L3178.4,127.9 L3177.3,130.6 L3180.9,135.2 L3176.3,139.8 L3171.7,136.2 L3169.0,137.3 L3168.3,143.1 L3161.7,143.1 L3161.0,137.3 L3158.3,136.2 L3153.7,139.8 L3149.1,135.2 L3152.7,130.6 L3151.6,127.9 L3145.8,127.2 L3145.8,120.6 L3151.6,119.9 L3152.7,117.2 L3149.1,112.6 L3153.7,108.0 L3158.3,111.6 Z" fill="none" stroke="#424242" stroke-width="3" stroke-linejoin="miter"/><circle cx="3165" cy="123.9" r="4.2" fill="none" stroke="#424242" stroke-width="3"/><circle cx="3227" cy="111" r="5.3" fill="none" stroke="#424242" stroke-width="2.8"/><circle cx="3253" cy="140" r="5.3" fill="none" stroke="#424242" stroke-width="2.8"/><path d="M3227,116.5 L3227,133.5 Q3227,140 3233.5,140 L3241.5,140 M3236.5,134 L3242,140 L3236.5,146" fill="none" stroke="#424242" stroke-width="2.8"/><path d="M3253,134.5 L3253,117.5 Q3253,111 3246.5,111 L3238.5,111 M3243.5,105 L3238,111 L3243.5,117" fill="none" stroke="#424242" stroke-width="2.8"/><rect x="3299.5" y="105.5" width="33" height="33" rx="3" fill="none" stroke="#424242" stroke-width="3"/><path d="M3316,105.5 L3316,138.5" stroke="#424242" stroke-width="3"/><circle cx="3376.0" cy="124" r="3.6" fill="#424242"/><circle cx="3390.5" cy="124" r="3.6" fill="#424242"/><circle cx="3405.0" cy="124" r="3.6" fill="#424242"/></svg><div style="position:absolute;left:674.90px;top:188.42px;font-family:'Liberation Sans', sans-serif;font-size:37.44px;line-height:37.44px;color:#808080;font-weight:400;font-style:normal;white-space:pre;-webkit-text-stroke-width:0.4px;letter-spacing:0.755px;">src</div><svg style="position:absolute;left:740.00px;top:190.00px;" width="24.00" height="30.00" viewBox="0 0 24 30"><path d="M5,3 L17,15 L5,27" fill="none" stroke="#808080" stroke-width="2.8"/></svg><div style="position:absolute;left:788.50px;top:187.30px;font-family:'Liberation Sans', sans-serif;font-size:40px;line-height:40px;color:#5f93b3;font-weight:700;font-style:normal;white-space:pre;transform:scaleX(0.87);transform-origin:0 0;">C</div><div style="position:absolute;left:838.00px;top:188.42px;font-family:'Liberation Sans', sans-serif;font-size:37.44px;line-height:37.44px;color:#808080;font-weight:400;font-style:normal;white-space:pre;-webkit-text-stroke-width:0.4px;letter-spacing:1.020px;">directory_tree.c</div><svg style="position:absolute;left:1125.00px;top:190.00px;" width="24.00" height="30.00" viewBox="0 0 24 30"><path d="M5,3 L17,15 L5,27" fill="none" stroke="#808080" stroke-width="2.8"/></svg><svg style="position:absolute;left:1162.00px;top:184.00px;" width="40.00" height="44.00" viewBox="0 0 40 44"><path d="M20,3.5 L35,11.5 L35,31.5 L20,39.5 L5,31.5 L5,11.5 Z M5,11.5 L20,19.5 L35,11.5 M20,19.5 L20,39.5" fill="none" stroke="#5e308b" stroke-width="3" stroke-linejoin="round"/></svg><div style="position:absolute;left:1214.10px;top:188.42px;font-family:'Liberation Sans', sans-serif;font-size:37.44px;line-height:37.44px;color:#808080;font-weight:400;font-style:normal;white-space:pre;-webkit-text-stroke-width:0.4px;letter-spacing:0.975px;">create_this_directory(node_t *, char *)</div><svg style="position:absolute;left:0.00px;top:0.00px;pointer-events:none" width="3456.00" height="1000.00" viewBox="0 0 3456 1000"><rect x="3185" y="654" width="231" height="3.8" fill="#dce9fb"/><rect x="3201" y="654" width="42" height="3.8" fill="#b5d5fb"/><rect x="3179" y="258.0" width="2.4" height="8.0" fill="#4e8b4f"/><rect x="3179" y="386.0" width="2.4" height="16.0" fill="#4e8b4f"/><rect x="3179" y="406.0" width="2.4" height="52.0" fill="#3b7fcb"/><rect x="3179" y="458.0" width="2.4" height="16.0" fill="#4e8b4f"/><rect x="3179" y="474.0" width="2.4" height="4.0" fill="#3b7fcb"/><rect x="3179" y="478.0" width="2.4" height="108.0" fill="#4e8b4f"/><rect x="3179" y="590.0" width="2.4" height="168.0" fill="#3b7fcb"/><rect x="3179" y="766.0" width="2.4" height="24.0" fill="#4e8b4f"/><rect x="3179" y="794.0" width="2.4" height="32.0" fill="#3b7fcb"/></svg><div style="position:absolute;left:3185px;top:237.10px;font-family:'Liberation Mono', monospace;font-size:4.4px;line-height:4.0px;letter-spacing:-0.640px;white-space:pre;-webkit-text-stroke-width:0.25px"><span style="color:#a020d3">#include</span> <span style="color:#95261f">&lt;assert.h&gt;</span></div><div style="position:absolute;left:3185px;top:241.10px;font-family:'Liberation Mono', monospace;font-size:4.4px;line-height:4.0px;letter-spacing:-0.640px;white-space:pre;-webkit-text-stroke-width:0.25px"><span style="color:#a020d3">#include</span> <span style="color:#95261f">&lt;stdio.h&gt;</span></div><div style="position:absolute;left:3185px;top:245.10px;font-family:'Liberation Mono', monospace;font-size:4.4px;line-height:4.0px;letter-spacing:-0.640px;white-space:pre;-webkit-text-stroke-width:0.25px"><span style="color:#a020d3">#include</span> <span style="color:#95261f">&lt;stdlib.h&gt;</span></div><div style="position:absolute;left:3185px;top:249.10px;font-family:'Liberation Mono', monospace;font-size:4.4px;line-height:4.0px;letter-spacing:-0.640px;white-space:pre;-webkit-text-stroke-width:0.25px"><span style="color:#a020d3">#include</span> <span style="color:#95261f">&lt;string.h&gt;</span></div><div style="position:absolute;left:3185px;top:253.10px;font-family:'Liberation Mono', monospace;font-size:4.4px;line-height:4.0px;letter-spacing:-0.640px;white-space:pre;-webkit-text-stroke-width:0.25px"><span style="color:#a020d3">#include</span> <span style="color:#95261f">&lt;sys/stat.h&gt;</span></div><div style="position:absolute;left:3185px;top:257.10px;font-family:'Liberation Mono', monospace;font-size:4.4px;line-height:4.0px;letter-spacing:-0.640px;white-space:pre;-webkit-text-stroke-width:0.25px"><span style="color:#a020d3">#include</span> <span style="color:#95261f">&lt;sys/types.h&gt;</span></div><div style="position:absolute;left:3185px;top:261.10px;font-family:'Liberation Mono', monospace;font-size:4.4px;line-height:4.0px;letter-spacing:-0.640px;white-space:pre;-webkit-text-stroke-width:0.25px"><span style="color:#a020d3">#include</span> <span style="color:#95261f">&lt;assert.h&gt;</span></div><div style="position:absolute;left:3185px;top:265.10px;font-family:'Liberation Mono', monospace;font-size:4.4px;line-height:4.0px;letter-spacing:-0.640px;white-space:pre;-webkit-text-stroke-width:0.25px"></div><div style="position:absolute;left:3185px;top:269.10px;font-family:'Liberation Mono', monospace;font-size:4.4px;line-height:4.0px;letter-spacing:-0.640px;white-space:pre;-webkit-text-stroke-width:0.25px"><span style="color:#a020d3">#include</span> <span style="color:#95261f">&quot;</span><span style="color:#95261f">directory_tree.h</span><span style="color:#95261f">&quot;</span></div><div style="position:absolute;left:3185px;top:273.10px;font-family:'Liberation Mono', monospace;font-size:4.4px;line-height:4.0px;letter-spacing:-0.640px;white-space:pre;-webkit-text-stroke-width:0.25px"></div><div style="position:absolute;left:3185px;top:277.10px;font-family:'Liberation Mono', monospace;font-size:4.4px;line-height:4.0px;letter-spacing:-0.640px;white-space:pre;-webkit-text-stroke-width:0.25px"><span style="color:#0000f5">void</span> <span style="color:#755f30">init_node</span><span style="color:#1330f0">(</span><span style="color:#417d96">node_t</span> <span style="color:#000000">*</span><span style="color:#03107b">node</span><span style="color:#000000">,</span> <span style="color:#0000f5">char</span> <span style="color:#000000">*</span><span style="color:#03107b">name</span><span style="color:#000000">,</span> <span style="color:#417d96">node_type_t</span> <span style="color:#03107b">type</span><span style="color:#1330f0">)</span> <span style="color:#1330f0">{</span></div><div style="position:absolute;left:3185px;top:281.10px;font-family:'Liberation Mono', monospace;font-size:4.4px;line-height:4.0px;letter-spacing:-0.640px;white-space:pre;-webkit-text-stroke-width:0.25px">    <span style="color:#a020d3">if</span> <span style="color:#4e913f">(</span><span style="color:#03107b">name</span> <span style="color:#000000">=</span><span style="color:#000000">=</span> <span style="color:#0000f5">NULL</span><span style="color:#4e913f">)</span> <span style="color:#4e913f">{</span></div><div style="position:absolute;left:3185px;top:285.10px;font-family:'Liberation Mono', monospace;font-size:4.4px;line-height:4.0px;letter-spacing:-0.640px;white-space:pre;-webkit-text-stroke-width:0.25px">        <span style="color:#03107b">name</span> <span style="color:#000000">=</span> <span style="color:#755f30">strdup</span><span style="color:#733c1d">(</span><span style="color:#95261f">&quot;</span><span style="color:#95261f">ROOT</span><span style="color:#95261f">&quot;</span><span style="color:#733c1d">)</span><span style="color:#000000">;</span></div><div style="position:absolute;left:3185px;top:289.10px;font-family:'Liberation Mono', monospace;font-size:4.4px;line-height:4.0px;letter-spacing:-0.640px;white-space:pre;-webkit-text-stroke-width:0.25px">        <span style="color:#0000f5">assert</span><span style="color:#733c1d">(</span><span style="color:#03107b">name</span> <span style="color:#000000">!</span><span style="color:#000000">=</span> <span style="color:#0000f5">NULL</span><span style="color:#733c1d">)</span><span style="color:#000000">;</span></div><div style="position:absolute;left:3185px;top:293.10px;font-family:'Liberation Mono', monospace;font-size:4.4px;line-height:4.0px;letter-spacing:-0.640px;white-space:pre;-webkit-text-stroke-width:0.25px">    <span style="color:#4e913f">}</span></div><div style="position:absolute;left:3185px;top:297.10px;font-family:'Liberation Mono', monospace;font-size:4.4px;line-height:4.0px;letter-spacing:-0.640px;white-space:pre;-webkit-text-stroke-width:0.25px">    <span style="color:#03107b">node</span><span style="color:#000000">-</span><span style="color:#000000">&gt;</span><span style="color:#03107b">name</span> <span style="color:#000000">=</span> <span style="color:#03107b">name</span><span style="color:#000000">;</span></div><div style="position:absolute;left:3185px;top:301.10px;font-family:'Liberation Mono', monospace;font-size:4.4px;line-height:4.0px;letter-spacing:-0.640px;white-space:pre;-webkit-text-stroke-width:0.25px">    <span style="color:#03107b">node</span><span style="color:#000000">-</span><span style="color:#000000">&gt;</span><span style="color:#03107b">type</span> <span style="color:#000000">=</span> <span style="color:#03107b">type</span><span style="color:#000000">;</span></div><div style="position:absolute;left:3185px;top:305.10px;font-family:'Liberation Mono', monospace;font-size:4.4px;line-height:4.0px;letter-spacing:-0.640px;white-space:pre;-webkit-text-stroke-width:0.25px"><span style="color:#1330f0">}</span></div><div style="position:absolute;left:3185px;top:309.10px;font-family:'Liberation Mono', monospace;font-size:4.4px;line-height:4.0px;letter-spacing:-0.640px;white-space:pre;-webkit-text-stroke-width:0.25px"></div><div style="position:absolute;left:3185px;top:313.10px;font-family:'Liberation Mono', monospace;font-size:4.4px;line-height:4.0px;letter-spacing:-0.640px;white-space:pre;-webkit-text-stroke-width:0.25px"><span style="color:#417d96">file_node_t</span> <span style="color:#000000">*</span><span style="color:#755f30">init_file_node</span><span style="color:#1330f0">(</span><span style="color:#0000f5">char</span> <span style="color:#000000">*</span><span style="color:#03107b">name</span><span style="color:#000000">,</span> <span style="color:#417d96">size_t</span> <span style="color:#03107b">size</span><span style="color:#000000">,</span> <span style="color:#417d96">uint8_t</span> <span style="color:#000000">*</span><span style="color:#03107b">contents</span><span style="color:#1330f0">)</span> <span style="color:#1330f0">{</span></div><div style="position:absolute;left:3185px;top:317.10px;font-family:'Liberation Mono', monospace;font-size:4.4px;line-height:4.0px;letter-spacing:-0.640px;white-space:pre;-webkit-text-stroke-width:0.25px">    <span style="color:#417d96">file_node_t</span> <span style="color:#000000">*</span><span style="color:#03107b">node</span> <span style="color:#000000">=</span> <span style="color:#755f30">malloc</span><span style="color:#4e913f">(</span><span style="color:#0000f5">sizeof</span><span style="color:#733c1d">(</span><span style="color:#417d96">file_node_t</span><span style="color:#733c1d">)</span><span style="color:#4e913f">)</span><span style="color:#000000">;</span></div><div style="position:absolute;left:3185px;top:321.10px;font-family:'Liberation Mono', monospace;font-size:4.4px;line-height:4.0px;letter-spacing:-0.640px;white-space:pre;-webkit-text-stroke-width:0.25px">    <span style="color:#0000f5">assert</span><span style="color:#4e913f">(</span><span style="color:#03107b">node</span> <span style="color:#000000">!</span><span style="color:#000000">=</span> <span style="color:#0000f5">NULL</span><span style="color:#4e913f">)</span><span style="color:#000000">;</span></div><div style="position:absolute;left:3185px;top:325.10px;font-family:'Liberation Mono', monospace;font-size:4.4px;line-height:4.0px;letter-spacing:-0.640px;white-space:pre;-webkit-text-stroke-width:0.25px">    <span style="color:#755f30">init_node</span><span style="color:#4e913f">(</span><span style="color:#733c1d">(</span><span style="color:#417d96">node_t</span> <span style="color:#000000">*</span><span style="color:#733c1d">)</span> <span style="color:#03107b">node</span><span style="color:#000000">,</span> <span style="color:#03107b">name</span><span style="color:#000000">,</span> <span style="color:#2f6ebb">FILE_TYPE</span><span style="color:#4e913f">)</span><span style="color:#000000">;</span></div><div style="position:absolute;left:3185px;top:329.10px;font-family:'Liberation Mono', monospace;font-size:4.4px;line-height:4.0px;letter-spacing:-0.640px;white-space:pre;-webkit-text-stroke-width:0.25px">    <span style="color:#03107b">node</span><span style="color:#000000">-</span><span style="color:#000000">&gt;</span><span style="color:#03107b">size</span> <span style="color:#000000">=</span> <span style="color:#03107b">size</span><span style="color:#000000">;</span></div><div style="position:absolute;left:3185px;top:333.10px;font-family:'Liberation Mono', monospace;font-size:4.4px;line-height:4.0px;letter-spacing:-0.640px;white-space:pre;-webkit-text-stroke-width:0.25px">    <span style="color:#03107b">node</span><span style="color:#000000">-</span><span style="color:#000000">&gt;</span><span style="color:#03107b">contents</span> <span style="color:#000000">=</span> <span style="color:#03107b">contents</span><span style="color:#000000">;</span></div><div style="position:absolute;left:3185px;top:337.10px;font-family:'Liberation Mono', monospace;font-size:4.4px;line-height:4.0px;letter-spacing:-0.640px;white-space:pre;-webkit-text-stroke-width:0.25px">    <span style="color:#a020d3">return</span> <span style="color:#03107b">node</span><span style="color:#000000">;</span></div><div style="position:absolute;left:3185px;top:341.10px;font-family:'Liberation Mono', monospace;font-size:4.4px;line-height:4.0px;letter-spacing:-0.640px;white-space:pre;-webkit-text-stroke-width:0.25px"><span style="color:#1330f0">}</span></div><div style="position:absolute;left:3185px;top:345.10px;font-family:'Liberation Mono', monospace;font-size:4.4px;line-height:4.0px;letter-spacing:-0.640px;white-space:pre;-webkit-text-stroke-width:0.25px"></div><div style="position:absolute;left:3185px;top:349.10px;font-family:'Liberation Mono', monospace;font-size:4.4px;line-height:4.0px;letter-spacing:-0.640px;white-space:pre;-webkit-text-stroke-width:0.25px"><span style="color:#417d96">directory_node_t</span> <span style="color:#000000">*</span><span style="color:#755f30">init_directory_node</span><span style="color:#1330f0">(</span><span style="color:#0000f5">char</span> <span style="color:#000000">*</span><span style="color:#03107b">name</span><span style="color:#1330f0">)</span> <span style="color:#1330f0">{</span></div><div style="position:absolute;left:3185px;top:353.10px;font-family:'Liberation Mono', monospace;font-size:4.4px;line-height:4.0px;letter-spacing:-0.640px;white-space:pre;-webkit-text-stroke-width:0.25px">    <span style="color:#417d96">directory_node_t</span> <span style="color:#000000">*</span><span style="color:#03107b">node</span> <span style="color:#000000">=</span> <span style="color:#755f30">malloc</span><span style="color:#4e913f">(</span><span style="color:#0000f5">sizeof</span><span style="color:#733c1d">(</span><span style="color:#417d96">directory_node_t</span><span style="color:#733c1d">)</span><span style="color:#4e913f">)</span><span style="color:#000000">;</span></div><div style="position:absolute;left:3185px;top:357.10px;font-family:'Liberation Mono', monospace;font-size:4.4px;line-height:4.0px;letter-spacing:-0.640px;white-space:pre;-webkit-text-stroke-width:0.25px">    <span style="color:#0000f5">assert</span><span style="color:#4e913f">(</span><span style="color:#03107b">node</span> <span style="color:#000000">!</span><span style="color:#000000">=</span> <span style="color:#0000f5">NULL</span><span style="color:#4e913f">)</span><span style="color:#000000">;</span></div><div style="position:absolute;left:3185px;top:361.10px;font-family:'Liberation Mono', monospace;font-size:4.4px;line-height:4.0px;letter-spacing:-0.640px;white-space:pre;-webkit-text-stroke-width:0.25px">    <span style="color:#755f30">init_node</span><span style="color:#4e913f">(</span><span style="color:#733c1d">(</span><span style="color:#417d96">node_t</span> <span style="color:#000000">*</span><span style="color:#733c1d">)</span> <span style="color:#03107b">node</span><span style="color:#000000">,</span> <span style="color:#03107b">name</span><span style="color:#000000">,</span> <span style="color:#2f6ebb">DIRECTORY_TYPE</span><span style="color:#4e913f">)</span><span style="color:#000000">;</span></div><div style="position:absolute;left:3185px;top:365.10px;font-family:'Liberation Mono', monospace;font-size:4.4px;line-height:4.0px;letter-spacing:-0.640px;white-space:pre;-webkit-text-stroke-width:0.25px">    <span style="color:#03107b">node</span><span style="color:#000000">-</span><span style="color:#000000">&gt;</span><span style="color:#03107b">num_children</span> <span style="color:#000000">=</span> <span style="color:#3c845c">0</span><span style="color:#000000">;</span></div><div style="position:absolute;left:3185px;top:369.10px;font-family:'Liberation Mono', monospace;font-size:4.4px;line-height:4.0px;letter-spacing:-0.640px;white-space:pre;-webkit-text-stroke-width:0.25px">    <span style="color:#03107b">node</span><span style="color:#000000">-</span><span style="color:#000000">&gt;</span><span style="color:#03107b">children</span> <span style="color:#000000">=</span> <span style="color:#0000f5">NULL</span><span style="color:#000000">;</span></div><div style="position:absolute;left:3185px;top:373.10px;font-family:'Liberation Mono', monospace;font-size:4.4px;line-height:4.0px;letter-spacing:-0.640px;white-space:pre;-webkit-text-stroke-width:0.25px">    <span style="color:#a020d3">return</span> <span style="color:#03107b">node</span><span style="color:#000000">;</span></div><div style="position:absolute;left:3185px;top:377.10px;font-family:'Liberation Mono', monospace;font-size:4.4px;line-height:4.0px;letter-spacing:-0.640px;white-space:pre;-webkit-text-stroke-width:0.25px"><span style="color:#1330f0">}</span></div><div style="position:absolute;left:3185px;top:381.10px;font-family:'Liberation Mono', monospace;font-size:4.4px;line-height:4.0px;letter-spacing:-0.640px;white-space:pre;-webkit-text-stroke-width:0.25px"></div><div style="position:absolute;left:3185px;top:385.10px;font-family:'Liberation Mono', monospace;font-size:4.4px;line-height:4.0px;letter-spacing:-0.640px;white-space:pre;-webkit-text-stroke-width:0.25px"><span style="color:#0000f5">void</span> <span style="color:#755f30">resize</span><span style="color:#1330f0">(</span><span style="color:#417d96">directory_node_t</span> <span style="color:#000000">*</span><span style="color:#03107b">dnode</span><span style="color:#1330f0">)</span> <span style="color:#1330f0">{</span></div><div style="position:absolute;left:3185px;top:389.10px;font-family:'Liberation Mono', monospace;font-size:4.4px;line-height:4.0px;letter-spacing:-0.640px;white-space:pre;-webkit-text-stroke-width:0.25px">  <span style="color:#03107b">dnode</span><span style="color:#000000">-</span><span style="color:#000000">&gt;</span><span style="color:#03107b">children</span> <span style="color:#000000">=</span> <span style="color:#4e913f">(</span><span style="color:#417d96">node_t</span> <span style="color:#000000">*</span><span style="color:#000000">*</span><span style="color:#4e913f">)</span><span style="color:#755f30">realloc</span><span style="color:#4e913f">(</span><span style="color:#03107b">dnode</span><span style="color:#000000">-</span><span style="color:#000000">&gt;</span><span style="color:#03107b">children</span><span style="color:#000000">,</span> <span style="color:#03107b">dnode</span><span style="color:#000000">-</span><span style="color:#000000">&gt;</span><span style="color:#03107b">num_children</span> <span style="color:#000000">*</span> <span style="color:#0000f5">sizeof</span><span style="color:#733c1d">(</span><span style="color:#417d96">node_t</span> <span style="color:#000000">*</span><span style="color:#733c1d">)</span><span style="color:#4e913f">)</span><span style="color:#000000">;</span></div><div style="position:absolute;left:3185px;top:393.10px;font-family:'Liberation Mono', monospace;font-size:4.4px;line-height:4.0px;letter-spacing:-0.640px;white-space:pre;-webkit-text-stroke-width:0.25px"><span style="color:#1330f0">}</span></div><div style="position:absolute;left:3185px;top:397.10px;font-family:'Liberation Mono', monospace;font-size:4.4px;line-height:4.0px;letter-spacing:-0.640px;white-space:pre;-webkit-text-stroke-width:0.25px"></div><div style="position:absolute;left:3185px;top:401.10px;font-family:'Liberation Mono', monospace;font-size:4.4px;line-height:4.0px;letter-spacing:-0.640px;white-space:pre;-webkit-text-stroke-width:0.25px"><span style="color:#0000f5">void</span> <span style="color:#755f30">add_child_directory_tree</span><span style="color:#1330f0">(</span><span style="color:#417d96">directory_node_t</span> <span style="color:#000000">*</span><span style="color:#03107b">dnode</span><span style="color:#000000">,</span> <span style="color:#417d96">node_t</span> <span style="color:#000000">*</span><span style="color:#03107b">child</span><span style="color:#1330f0">)</span> <span style="color:#1330f0">{</span></div><div style="position:absolute;left:3185px;top:405.10px;font-family:'Liberation Mono', monospace;font-size:4.4px;line-height:4.0px;letter-spacing:-0.640px;white-space:pre;-webkit-text-stroke-width:0.25px">    <span style="color:#377e22">// (void) dnode;</span></div><div style="position:absolute;left:3185px;top:409.10px;font-family:'Liberation Mono', monospace;font-size:4.4px;line-height:4.0px;letter-spacing:-0.640px;white-space:pre;-webkit-text-stroke-width:0.25px">    <span style="color:#377e22">// (void) child;</span></div><div style="position:absolute;left:3185px;top:413.10px;font-family:'Liberation Mono', monospace;font-size:4.4px;line-height:4.0px;letter-spacing:-0.640px;white-space:pre;-webkit-text-stroke-width:0.25px">    <span style="color:#0000f5">assert</span><span style="color:#4e913f">(</span><span style="color:#03107b">child</span> <span style="color:#000000">!</span><span style="color:#000000">=</span> <span style="color:#0000f5">NULL</span><span style="color:#4e913f">)</span><span style="color:#000000">;</span></div><div style="position:absolute;left:3185px;top:417.10px;font-family:'Liberation Mono', monospace;font-size:4.4px;line-height:4.0px;letter-spacing:-0.640px;white-space:pre;-webkit-text-stroke-width:0.25px">    <span style="color:#03107b">dnode</span><span style="color:#000000">-</span><span style="color:#000000">&gt;</span><span style="color:#03107b">num_children</span><span style="color:#000000">+</span><span style="color:#000000">+</span><span style="color:#000000">;</span></div><div style="position:absolute;left:3185px;top:421.10px;font-family:'Liberation Mono', monospace;font-size:4.4px;line-height:4.0px;letter-spacing:-0.640px;white-space:pre;-webkit-text-stroke-width:0.25px">    <span style="color:#755f30">resize</span><span style="color:#4e913f">(</span><span style="color:#03107b">dnode</span><span style="color:#4e913f">)</span><span style="color:#000000">;</span></div><div style="position:absolute;left:3185px;top:425.10px;font-family:'Liberation Mono', monospace;font-size:4.4px;line-height:4.0px;letter-spacing:-0.640px;white-space:pre;-webkit-text-stroke-width:0.25px">    <span style="color:#03107b">dnode</span><span style="color:#000000">-</span><span style="color:#000000">&gt;</span><span style="color:#03107b">children</span><span style="color:#4e913f">[</span><span style="color:#03107b">dnode</span><span style="color:#000000">-</span><span style="color:#000000">&gt;</span><span style="color:#03107b">num_children</span><span style="color:#000000">-</span><span style="color:#3c845c">1</span><span style="color:#4e913f">]</span><span style="color:#000000">=</span> <span style="color:#03107b">child</span><span style="color:#000000">;</span></div><div style="position:absolute;left:3185px;top:429.10px;font-family:'Liberation Mono', monospace;font-size:4.4px;line-height:4.0px;letter-spacing:-0.640px;white-space:pre;-webkit-text-stroke-width:0.25px">    <span style="color:#0000f5">int</span> <span style="color:#03107b">idx</span> <span style="color:#000000">=</span> <span style="color:#3c845c">0</span><span style="color:#000000">;</span></div><div style="position:absolute;left:3185px;top:433.10px;font-family:'Liberation Mono', monospace;font-size:4.4px;line-height:4.0px;letter-spacing:-0.640px;white-space:pre;-webkit-text-stroke-width:0.25px">    <span style="color:#377e22">// fprintf(stderr, &quot;%s \n&quot;, dnode-&gt;children[idx]-&gt;name);</span></div><div style="position:absolute;left:3185px;top:437.10px;font-family:'Liberation Mono', monospace;font-size:4.4px;line-height:4.0px;letter-spacing:-0.640px;white-space:pre;-webkit-text-stroke-width:0.25px">    <span style="color:#377e22">// fprintf(stderr, &quot;%s \n&quot;, child-&gt;name);</span></div><div style="position:absolute;left:3185px;top:441.10px;font-family:'Liberation Mono', monospace;font-size:4.4px;line-height:4.0px;letter-spacing:-0.640px;white-space:pre;-webkit-text-stroke-width:0.25px">    <span style="color:#a020d3">while</span><span style="color:#4e913f">(</span><span style="color:#755f30">strcmp</span><span style="color:#733c1d">(</span><span style="color:#03107b">dnode</span><span style="color:#000000">-</span><span style="color:#000000">&gt;</span><span style="color:#03107b">children</span><span style="color:#1330f0">[</span><span style="color:#03107b">idx</span><span style="color:#1330f0">]</span><span style="color:#000000">-</span><span style="color:#000000">&gt;</span><span style="color:#03107b">name</span><span style="color:#000000">,</span> <span style="color:#03107b">child</span><span style="color:#000000">-</span><span style="color:#000000">&gt;</span><span style="color:#03107b">name</span><span style="color:#733c1d">)</span> <span style="color:#000000">&lt;</span> <span style="color:#3c845c">0</span><span style="color:#4e913f">)</span><span style="color:#4e913f">{</span></div><div style="position:absolute;left:3185px;top:445.10px;font-family:'Liberation Mono', monospace;font-size:4.4px;line-height:4.0px;letter-spacing:-0.640px;white-space:pre;-webkit-text-stroke-width:0.25px">        <span style="color:#03107b">idx</span><span style="color:#000000">+</span><span style="color:#000000">+</span><span style="color:#000000">;</span></div><div style="position:absolute;left:3185px;top:449.10px;font-family:'Liberation Mono', monospace;font-size:4.4px;line-height:4.0px;letter-spacing:-0.640px;white-space:pre;-webkit-text-stroke-width:0.25px">        <span style="color:#377e22">// fprintf(stderr, &quot;Reached \n&quot;);</span></div><div style="position:absolute;left:3185px;top:453.10px;font-family:'Liberation Mono', monospace;font-size:4.4px;line-height:4.0px;letter-spacing:-0.640px;white-space:pre;-webkit-text-stroke-width:0.25px">    <span style="color:#4e913f">}</span></div><div style="position:absolute;left:3185px;top:457.10px;font-family:'Liberation Mono', monospace;font-size:4.4px;line-height:4.0px;letter-spacing:-0.640px;white-space:pre;-webkit-text-stroke-width:0.25px">    <span style="color:#03107b">idx</span><span style="color:#000000">+</span><span style="color:#000000">+</span><span style="color:#000000">;</span> <span style="color:#377e22">//adds another one because child is the first element AFTER i</span></div><div style="position:absolute;left:3185px;top:461.10px;font-family:'Liberation Mono', monospace;font-size:4.4px;line-height:4.0px;letter-spacing:-0.640px;white-space:pre;-webkit-text-stroke-width:0.25px">    <span style="color:#a020d3">for</span> <span style="color:#4e913f">(</span><span style="color:#0000f5">int</span> <span style="color:#03107b">j</span> <span style="color:#000000">=</span> <span style="color:#03107b">dnode</span><span style="color:#000000">-</span><span style="color:#000000">&gt;</span><span style="color:#03107b">num_children</span><span style="color:#000000">-</span><span style="color:#3c845c">1</span><span style="color:#000000">;</span> <span style="color:#03107b">j</span> <span style="color:#000000">&gt;</span> <span style="color:#03107b">idx</span><span style="color:#000000">;</span> <span style="color:#03107b">j</span><span style="color:#000000">-</span><span style="color:#000000">-</span><span style="color:#4e913f">)</span><span style="color:#4e913f">{</span></div><div style="position:absolute;left:3185px;top:465.10px;font-family:'Liberation Mono', monospace;font-size:4.4px;line-height:4.0px;letter-spacing:-0.640px;white-space:pre;-webkit-text-stroke-width:0.25px">        <span style="color:#03107b">dnode</span><span style="color:#000000">-</span><span style="color:#000000">&gt;</span><span style="color:#03107b">children</span><span style="color:#733c1d">[</span><span style="color:#03107b">j</span><span style="color:#733c1d">]</span> <span style="color:#000000">=</span> <span style="color:#03107b">dnode</span><span style="color:#000000">-</span><span style="color:#000000">&gt;</span><span style="color:#03107b">children</span><span style="color:#733c1d">[</span><span style="color:#03107b">j</span><span style="color:#000000">-</span><span style="color:#3c845c">1</span><span style="color:#733c1d">]</span><span style="color:#000000">;</span></div><div style="position:absolute;left:3185px;top:469.10px;font-family:'Liberation Mono', monospace;font-size:4.4px;line-height:4.0px;letter-spacing:-0.640px;white-space:pre;-webkit-text-stroke-width:0.25px">        <span style="color:#377e22">// if (strcmp(dnode-&gt;children[idx]-&gt;name, child-&gt;name) == 0){</span></div><div style="position:absolute;left:3185px;top:473.10px;font-family:'Liberation Mono', monospace;font-size:4.4px;line-height:4.0px;letter-spacing:-0.640px;white-space:pre;-webkit-text-stroke-width:0.25px"></div><div style="position:absolute;left:3185px;top:477.10px;font-family:'Liberation Mono', monospace;font-size:4.4px;line-height:4.0px;letter-spacing:-0.640px;white-space:pre;-webkit-text-stroke-width:0.25px">        <span style="color:#377e22">// free_directory_tree(dnode-&gt;children[idx]);</span></div><div style="position:absolute;left:3185px;top:481.10px;font-family:'Liberation Mono', monospace;font-size:4.4px;line-height:4.0px;letter-spacing:-0.640px;white-space:pre;-webkit-text-stroke-width:0.25px">        <span style="color:#377e22">// dnode-&gt;children[idx] = child;</span></div><div style="position:absolute;left:3185px;top:485.10px;font-family:'Liberation Mono', monospace;font-size:4.4px;line-height:4.0px;letter-spacing:-0.640px;white-space:pre;-webkit-text-stroke-width:0.25px">        <span style="color:#377e22">// fprintf(stderr, &quot;%s \n&quot;, dnode-&gt;children[idx]-&gt;name);</span></div><div style="position:absolute;left:3185px;top:489.10px;font-family:'Liberation Mono', monospace;font-size:4.4px;line-height:4.0px;letter-spacing:-0.640px;white-space:pre;-webkit-text-stroke-width:0.25px">        <span style="color:#377e22">// fprintf(stderr, &quot;%s \n&quot;, dnode-&gt;children[idx]-&gt;name);</span></div><div style="position:absolute;left:3185px;top:493.10px;font-family:'Liberation Mono', monospace;font-size:4.4px;line-height:4.0px;letter-spacing:-0.640px;white-space:pre;-webkit-text-stroke-width:0.25px">        <span style="color:#377e22">// }</span></div><div style="position:absolute;left:3185px;top:497.10px;font-family:'Liberation Mono', monospace;font-size:4.4px;line-height:4.0px;letter-spacing:-0.640px;white-space:pre;-webkit-text-stroke-width:0.25px">    <span style="color:#4e913f">}</span></div><div style="position:absolute;left:3185px;top:501.10px;font-family:'Liberation Mono', monospace;font-size:4.4px;line-height:4.0px;letter-spacing:-0.640px;white-space:pre;-webkit-text-stroke-width:0.25px"><span style="color:#1330f0">}</span></div><div style="position:absolute;left:3185px;top:505.10px;font-family:'Liberation Mono', monospace;font-size:4.4px;line-height:4.0px;letter-spacing:-0.640px;white-space:pre;-webkit-text-stroke-width:0.25px"></div><div style="position:absolute;left:3185px;top:509.10px;font-family:'Liberation Mono', monospace;font-size:4.4px;line-height:4.0px;letter-spacing:-0.640px;white-space:pre;-webkit-text-stroke-width:0.25px"><span style="color:#377e22">/**</span></div><div style="position:absolute;left:3185px;top:513.10px;font-family:'Liberation Mono', monospace;font-size:4.4px;line-height:4.0px;letter-spacing:-0.640px;white-space:pre;-webkit-text-stroke-width:0.25px"><span style="color:#377e22"> * Prints all the subdirectories and files in a directory tree.</span></div><div style="position:absolute;left:3185px;top:517.10px;font-family:'Liberation Mono', monospace;font-size:4.4px;line-height:4.0px;letter-spacing:-0.640px;white-space:pre;-webkit-text-stroke-width:0.25px"><span style="color:#377e22"> * See the project spec for the formatting requirements of this printed tree.</span></div><div style="position:absolute;left:3185px;top:521.10px;font-family:'Liberation Mono', monospace;font-size:4.4px;line-height:4.0px;letter-spacing:-0.640px;white-space:pre;-webkit-text-stroke-width:0.25px"><span style="color:#377e22"> *</span></div><div style="position:absolute;left:3185px;top:525.10px;font-family:'Liberation Mono', monospace;font-size:4.4px;line-height:4.0px;letter-spacing:-0.640px;white-space:pre;-webkit-text-stroke-width:0.25px"><span style="color:#377e22"> * @param node the root of the directory tree. You may assume this is a directory node.</span></div><div style="position:absolute;left:3185px;top:529.10px;font-family:'Liberation Mono', monospace;font-size:4.4px;line-height:4.0px;letter-spacing:-0.640px;white-space:pre;-webkit-text-stroke-width:0.25px"><span style="color:#377e22"> */</span></div><div style="position:absolute;left:3185px;top:533.10px;font-family:'Liberation Mono', monospace;font-size:4.4px;line-height:4.0px;letter-spacing:-0.640px;white-space:pre;-webkit-text-stroke-width:0.25px"><span style="color:#0000f5">void</span> <span style="color:#755f30">print_this_directory</span><span style="color:#1330f0">(</span><span style="color:#417d96">node_t</span> <span style="color:#000000">*</span> <span style="color:#03107b">node</span><span style="color:#000000">,</span> <span style="color:#417d96">size_t</span> <span style="color:#03107b">tat</span><span style="color:#1330f0">)</span><span style="color:#1330f0">{</span></div><div style="position:absolute;left:3185px;top:537.10px;font-family:'Liberation Mono', monospace;font-size:4.4px;line-height:4.0px;letter-spacing:-0.640px;white-space:pre;-webkit-text-stroke-width:0.25px">    <span style="color:#a020d3">for</span><span style="color:#4e913f">(</span><span style="color:#417d96">size_t</span> <span style="color:#03107b">i</span> <span style="color:#000000">=</span> <span style="color:#3c845c">0</span><span style="color:#000000">;</span> <span style="color:#03107b">i</span> <span style="color:#000000">&lt;</span> <span style="color:#03107b">tat</span><span style="color:#000000">;</span> <span style="color:#03107b">i</span><span style="color:#000000">+</span><span style="color:#000000">+</span><span style="color:#4e913f">)</span><span style="color:#4e913f">{</span></div><div style="position:absolute;left:3185px;top:541.10px;font-family:'Liberation Mono', monospace;font-size:4.4px;line-height:4.0px;letter-spacing:-0.640px;white-space:pre;-webkit-text-stroke-width:0.25px">        <span style="color:#755f30">fprintf</span><span style="color:#733c1d">(</span><span style="color:#0000f5">stderr</span><span style="color:#000000">,</span> <span style="color:#95261f">&quot;</span><span style="color:#95261f">  </span><span style="color:#95261f">&quot;</span><span style="color:#733c1d">)</span><span style="color:#000000">;</span></div><div style="position:absolute;left:3185px;top:545.10px;font-family:'Liberation Mono', monospace;font-size:4.4px;line-height:4.0px;letter-spacing:-0.640px;white-space:pre;-webkit-text-stroke-width:0.25px">    <span style="color:#4e913f">}</span></div><div style="position:absolute;left:3185px;top:549.10px;font-family:'Liberation Mono', monospace;font-size:4.4px;line-height:4.0px;letter-spacing:-0.640px;white-space:pre;-webkit-text-stroke-width:0.25px">    <span style="color:#755f30">fprintf</span><span style="color:#4e913f">(</span><span style="color:#0000f5">stderr</span><span style="color:#000000">,</span> <span style="color:#95261f">&quot;</span><span style="color:#03107b">%s</span><span style="color:#95261f"> </span><span style="color:#da2f20">\n</span><span style="color:#95261f">&quot;</span><span style="color:#000000">,</span> <span style="color:#03107b">node</span><span style="color:#000000">-</span><span style="color:#000000">&gt;</span><span style="color:#03107b">name</span><span style="color:#4e913f">)</span><span style="color:#000000">;</span></div><div style="position:absolute;left:3185px;top:553.10px;font-family:'Liberation Mono', monospace;font-size:4.4px;line-height:4.0px;letter-spacing:-0.640px;white-space:pre;-webkit-text-stroke-width:0.25px">    <span style="color:#a020d3">if</span> <span style="color:#4e913f">(</span><span style="color:#03107b">node</span><span style="color:#000000">-</span><span style="color:#000000">&gt;</span><span style="color:#03107b">type</span> <span style="color:#000000">=</span><span style="color:#000000">=</span> <span style="color:#2f6ebb">DIRECTORY_TYPE</span><span style="color:#4e913f">)</span><span style="color:#4e913f">{</span></div><div style="position:absolute;left:3185px;top:557.10px;font-family:'Liberation Mono', monospace;font-size:4.4px;line-height:4.0px;letter-spacing:-0.640px;white-space:pre;-webkit-text-stroke-width:0.25px">        <span style="color:#03107b">tat</span> <span style="color:#000000">=</span> <span style="color:#03107b">tat</span> <span style="color:#000000">+</span> <span style="color:#3c845c">1</span><span style="color:#000000">;</span></div><div style="position:absolute;left:3185px;top:561.10px;font-family:'Liberation Mono', monospace;font-size:4.4px;line-height:4.0px;letter-spacing:-0.640px;white-space:pre;-webkit-text-stroke-width:0.25px">        <span style="color:#417d96">directory_node_t</span> <span style="color:#000000">*</span><span style="color:#03107b">curr</span> <span style="color:#000000">=</span> <span style="color:#733c1d">(</span><span style="color:#417d96">directory_node_t</span> <span style="color:#000000">*</span><span style="color:#733c1d">)</span><span style="color:#03107b">node</span><span style="color:#000000">;</span></div><div style="position:absolute;left:3185px;top:565.10px;font-family:'Liberation Mono', monospace;font-size:4.4px;line-height:4.0px;letter-spacing:-0.640px;white-space:pre;-webkit-text-stroke-width:0.25px">        <span style="color:#a020d3">for</span> <span style="color:#733c1d">(</span><span style="color:#417d96">size_t</span> <span style="color:#03107b">i</span> <span style="color:#000000">=</span> <span style="color:#3c845c">0</span><span style="color:#000000">;</span> <span style="color:#03107b">i</span> <span style="color:#000000">&lt;</span> <span style="color:#03107b">curr</span><span style="color:#000000">-</span><span style="color:#000000">&gt;</span><span style="color:#03107b">num_children</span><span style="color:#000000">;</span> <span style="color:#03107b">i</span><span style="color:#000000">+</span><span style="color:#000000">+</span><span style="color:#733c1d">)</span><span style="color:#733c1d">{</span></div><div style="position:absolute;left:3185px;top:569.10px;font-family:'Liberation Mono', monospace;font-size:4.4px;line-height:4.0px;letter-spacing:-0.640px;white-space:pre;-webkit-text-stroke-width:0.25px">            <span style="color:#755f30">print_this_directory</span><span style="color:#1330f0">(</span><span style="color:#03107b">curr</span><span style="color:#000000">-</span><span style="color:#000000">&gt;</span><span style="color:#03107b">children</span><span style="color:#4e913f">[</span><span style="color:#03107b">i</span><span style="color:#4e913f">]</span><span style="color:#000000">,</span> <span style="color:#03107b">tat</span><span style="color:#1330f0">)</span><span style="color:#000000">;</span></div><div style="position:absolute;left:3185px;top:573.10px;font-family:'Liberation Mono', monospace;font-size:4.4px;line-height:4.0px;letter-spacing:-0.640px;white-space:pre;-webkit-text-stroke-width:0.25px">        <span style="color:#733c1d">}</span></div><div style="position:absolute;left:3185px;top:577.10px;font-family:'Liberation Mono', monospace;font-size:4.4px;line-height:4.0px;letter-spacing:-0.640px;white-space:pre;-webkit-text-stroke-width:0.25px">    <span style="color:#4e913f">}</span></div><div style="position:absolute;left:3185px;top:581.10px;font-family:'Liberation Mono', monospace;font-size:4.4px;line-height:4.0px;letter-spacing:-0.640px;white-space:pre;-webkit-text-stroke-width:0.25px"><span style="color:#1330f0">}</span></div><div style="position:absolute;left:3185px;top:585.10px;font-family:'Liberation Mono', monospace;font-size:4.4px;line-height:4.0px;letter-spacing:-0.640px;white-space:pre;-webkit-text-stroke-width:0.25px"><span style="color:#0000f5">void</span> <span style="color:#755f30">print_directory_tree</span><span style="color:#1330f0">(</span><span style="color:#417d96">node_t</span> <span style="color:#000000">*</span><span style="color:#03107b">node</span><span style="color:#1330f0">)</span> <span style="color:#1330f0">{</span></div><div style="position:absolute;left:3185px;top:589.10px;font-family:'Liberation Mono', monospace;font-size:4.4px;line-height:4.0px;letter-spacing:-0.640px;white-space:pre;-webkit-text-stroke-width:0.25px">    <span style="color:#377e22">// (void) node;</span></div><div style="position:absolute;left:3185px;top:593.10px;font-family:'Liberation Mono', monospace;font-size:4.4px;line-height:4.0px;letter-spacing:-0.640px;white-space:pre;-webkit-text-stroke-width:0.25px">    <span style="color:#417d96">size_t</span> <span style="color:#03107b">tat</span> <span style="color:#000000">=</span> <span style="color:#3c845c">0</span><span style="color:#000000">;</span></div><div style="position:absolute;left:3185px;top:597.10px;font-family:'Liberation Mono', monospace;font-size:4.4px;line-height:4.0px;letter-spacing:-0.640px;white-space:pre;-webkit-text-stroke-width:0.25px">    <span style="color:#755f30">print_this_directory</span><span style="color:#4e913f">(</span><span style="color:#03107b">node</span><span style="color:#000000">,</span> <span style="color:#03107b">tat</span><span style="color:#4e913f">)</span><span style="color:#000000">;</span></div><div style="position:absolute;left:3185px;top:601.10px;font-family:'Liberation Mono', monospace;font-size:4.4px;line-height:4.0px;letter-spacing:-0.640px;white-space:pre;-webkit-text-stroke-width:0.25px"><span style="color:#1330f0">}</span></div><div style="position:absolute;left:3185px;top:605.10px;font-family:'Liberation Mono', monospace;font-size:4.4px;line-height:4.0px;letter-spacing:-0.640px;white-space:pre;-webkit-text-stroke-width:0.25px"></div><div style="position:absolute;left:3185px;top:609.10px;font-family:'Liberation Mono', monospace;font-size:4.4px;line-height:4.0px;letter-spacing:-0.640px;white-space:pre;-webkit-text-stroke-width:0.25px"><span style="color:#0000f5">void</span> <span style="color:#755f30">create_this_directory</span><span style="color:#1330f0">(</span><span style="color:#417d96">node_t</span> <span style="color:#000000">*</span><span style="color:#03107b">node</span><span style="color:#000000">,</span> <span style="color:#0000f5">char</span> <span style="color:#000000">*</span><span style="color:#03107b">path</span><span style="color:#1330f0">)</span><span style="color:#1330f0">{</span></div><div style="position:absolute;left:3185px;top:613.10px;font-family:'Liberation Mono', monospace;font-size:4.4px;line-height:4.0px;letter-spacing:-0.640px;white-space:pre;-webkit-text-stroke-width:0.25px">    <span style="color:#755f30">fprintf</span><span style="color:#4e913f">(</span><span style="color:#0000f5">stderr</span><span style="color:#000000">,</span> <span style="color:#95261f">&quot;</span><span style="color:#03107b">%s</span><span style="color:#95261f"> </span><span style="color:#da2f20">\n</span><span style="color:#95261f">&quot;</span><span style="color:#000000">,</span> <span style="color:#03107b">path</span><span style="color:#4e913f">)</span><span style="color:#000000">;</span></div><div style="position:absolute;left:3185px;top:617.10px;font-family:'Liberation Mono', monospace;font-size:4.4px;line-height:4.0px;letter-spacing:-0.640px;white-space:pre;-webkit-text-stroke-width:0.25px">    <span style="color:#755f30">fprintf</span><span style="color:#4e913f">(</span><span style="color:#0000f5">stderr</span><span style="color:#000000">,</span> <span style="color:#95261f">&quot;</span><span style="color:#03107b">%s</span><span style="color:#95261f"> </span><span style="color:#da2f20">\n</span><span style="color:#95261f">&quot;</span><span style="color:#000000">,</span> <span style="color:#03107b">node</span><span style="color:#000000">-</span><span style="color:#000000">&gt;</span><span style="color:#03107b">name</span><span style="color:#4e913f">)</span><span style="color:#000000">;</span></div><div style="position:absolute;left:3185px;top:621.10px;font-family:'Liberation Mono', monospace;font-size:4.4px;line-height:4.0px;letter-spacing:-0.640px;white-space:pre;-webkit-text-stroke-width:0.25px">    <span style="color:#0000f5">char</span> <span style="color:#000000">*</span><span style="color:#03107b">slash</span> <span style="color:#000000">=</span> <span style="color:#755f30">malloc</span><span style="color:#4e913f">(</span><span style="color:#3c845c">2</span> <span style="color:#000000">*</span> <span style="color:#0000f5">sizeof</span><span style="color:#733c1d">(</span><span style="color:#0000f5">char</span><span style="color:#733c1d">)</span><span style="color:#4e913f">)</span><span style="color:#000000">;</span></div><div style="position:absolute;left:3185px;top:625.10px;font-family:'Liberation Mono', monospace;font-size:4.4px;line-height:4.0px;letter-spacing:-0.640px;white-space:pre;-webkit-text-stroke-width:0.25px">    <span style="color:#03107b">slash</span> <span style="color:#000000">=</span> <span style="color:#95261f">&quot;</span><span style="color:#95261f">/</span><span style="color:#95261f">&quot;</span><span style="color:#000000">;</span></div><div style="position:absolute;left:3185px;top:629.10px;font-family:'Liberation Mono', monospace;font-size:4.4px;line-height:4.0px;letter-spacing:-0.640px;white-space:pre;-webkit-text-stroke-width:0.25px">    <span style="color:#417d96">size_t</span> <span style="color:#03107b">len</span> <span style="color:#000000">=</span> <span style="color:#4e913f">(</span><span style="color:#755f30">strlen</span><span style="color:#733c1d">(</span><span style="color:#03107b">path</span><span style="color:#733c1d">)</span> <span style="color:#000000">+</span> <span style="color:#755f30">strlen</span><span style="color:#733c1d">(</span><span style="color:#03107b">node</span><span style="color:#000000">-</span><span style="color:#000000">&gt;</span><span style="color:#03107b">name</span><span style="color:#733c1d">)</span> <span style="color:#000000">+</span> <span style="color:#755f30">strlen</span><span style="color:#733c1d">(</span><span style="color:#03107b">slash</span><span style="color:#733c1d">)</span> <span style="color:#000000">+</span> <span style="color:#3c845c">1</span><span style="color:#4e913f">)</span><span style="color:#000000">;</span></div><div style="position:absolute;left:3185px;top:633.10px;font-family:'Liberation Mono', monospace;font-size:4.4px;line-height:4.0px;letter-spacing:-0.640px;white-space:pre;-webkit-text-stroke-width:0.25px">    <span style="color:#755f30">fprintf</span><span style="color:#4e913f">(</span><span style="color:#0000f5">stderr</span><span style="color:#000000">,</span> <span style="color:#95261f">&quot;</span><span style="color:#95261f">Length </span><span style="color:#03107b">%zu</span><span style="color:#da2f20">\n</span><span style="color:#95261f">&quot;</span><span style="color:#000000">,</span> <span style="color:#03107b">len</span><span style="color:#4e913f">)</span><span style="color:#000000">;</span></div><div style="position:absolute;left:3185px;top:637.10px;font-family:'Liberation Mono', monospace;font-size:4.4px;line-height:4.0px;letter-spacing:-0.640px;white-space:pre;-webkit-text-stroke-width:0.25px">    <span style="color:#0000f5">char</span> <span style="color:#000000">*</span><span style="color:#03107b">newPath</span> <span style="color:#000000">=</span> <span style="color:#755f30">malloc</span><span style="color:#4e913f">(</span><span style="color:#733c1d">(</span><span style="color:#03107b">len</span><span style="color:#000000">+</span><span style="color:#3c845c">5</span><span style="color:#733c1d">)</span> <span style="color:#000000">*</span> <span style="color:#733c1d">(</span><span style="color:#0000f5">sizeof</span><span style="color:#1330f0">(</span><span style="color:#0000f5">char</span><span style="color:#1330f0">)</span><span style="color:#733c1d">)</span><span style="color:#4e913f">)</span><span style="color:#000000">;</span></div><div style="position:absolute;left:3185px;top:641.10px;font-family:'Liberation Mono', monospace;font-size:4.4px;line-height:4.0px;letter-spacing:-0.640px;white-space:pre;-webkit-text-stroke-width:0.25px">    <span style="color:#755f30">fprintf</span><span style="color:#4e913f">(</span><span style="color:#0000f5">stderr</span><span style="color:#000000">,</span> <span style="color:#95261f">&quot;</span><span style="color:#95261f">THIS IS </span><span style="color:#03107b">%s</span><span style="color:#95261f"> HERE</span><span style="color:#da2f20">\n</span><span style="color:#95261f">&quot;</span><span style="color:#000000">,</span> <span style="color:#03107b">newPath</span><span style="color:#4e913f">)</span><span style="color:#000000">;</span></div><div style="position:absolute;left:3185px;top:645.10px;font-family:'Liberation Mono', monospace;font-size:4.4px;line-height:4.0px;letter-spacing:-0.640px;white-space:pre;-webkit-text-stroke-width:0.25px">    <span style="color:#a020d3">if</span> <span style="color:#4e913f">(</span><span style="color:#755f30">strcmp</span><span style="color:#733c1d">(</span><span style="color:#03107b">node</span><span style="color:#000000">-</span><span style="color:#000000">&gt;</span><span style="color:#03107b">name</span><span style="color:#000000">,</span> <span style="color:#95261f">&quot;</span><span style="color:#95261f">ROOT</span><span style="color:#95261f">&quot;</span><span style="color:#733c1d">)</span><span style="color:#000000">=</span><span style="color:#000000">=</span><span style="color:#3c845c">0</span><span style="color:#4e913f">)</span><span style="color:#4e913f">{</span></div><div style="position:absolute;left:3185px;top:649.10px;font-family:'Liberation Mono', monospace;font-size:4.4px;line-height:4.0px;letter-spacing:-0.640px;white-space:pre;-webkit-text-stroke-width:0.25px">        <span style="color:#755f30">fprintf</span><span style="color:#733c1d">(</span><span style="color:#0000f5">stderr</span><span style="color:#000000">,</span> <span style="color:#95261f">&quot;</span><span style="color:#95261f">SOMETHING</span><span style="color:#95261f">&quot;</span><span style="color:#733c1d">)</span><span style="color:#000000">;</span></div><div style="position:absolute;left:3185px;top:657.10px;font-family:'Liberation Mono', monospace;font-size:4.4px;line-height:4.0px;letter-spacing:-0.640px;white-space:pre;-webkit-text-stroke-width:0.25px">    <span style="color:#4e913f">}</span></div><div style="position:absolute;left:3185px;top:661.10px;font-family:'Liberation Mono', monospace;font-size:4.4px;line-height:4.0px;letter-spacing:-0.640px;white-space:pre;-webkit-text-stroke-width:0.25px">    <span style="color:#a020d3">else</span><span style="color:#4e913f">{</span></div><div style="position:absolute;left:3185px;top:665.10px;font-family:'Liberation Mono', monospace;font-size:4.4px;line-height:4.0px;letter-spacing:-0.640px;white-space:pre;-webkit-text-stroke-width:0.25px">        <span style="color:#755f30">fprintf</span><span style="color:#733c1d">(</span><span style="color:#0000f5">stderr</span><span style="color:#000000">,</span> <span style="color:#95261f">&quot;</span><span style="color:#95261f">ELSE</span><span style="color:#95261f">&quot;</span><span style="color:#733c1d">)</span><span style="color:#000000">;</span></div><div style="position:absolute;left:3185px;top:669.10px;font-family:'Liberation Mono', monospace;font-size:4.4px;line-height:4.0px;letter-spacing:-0.640px;white-space:pre;-webkit-text-stroke-width:0.25px">        <span style="color:#755f30">strcat</span><span style="color:#733c1d">(</span><span style="color:#03107b">newPath</span><span style="color:#000000">,</span> <span style="color:#03107b">path</span><span style="color:#733c1d">)</span><span style="color:#000000">;</span></div><div style="position:absolute;left:3185px;top:673.10px;font-family:'Liberation Mono', monospace;font-size:4.4px;line-height:4.0px;letter-spacing:-0.640px;white-space:pre;-webkit-text-stroke-width:0.25px">        <span style="color:#755f30">strcat</span><span style="color:#733c1d">(</span><span style="color:#03107b">newPath</span><span style="color:#000000">,</span> <span style="color:#03107b">slash</span><span style="color:#733c1d">)</span><span style="color:#000000">;</span></div><div style="position:absolute;left:3185px;top:677.10px;font-family:'Liberation Mono', monospace;font-size:4.4px;line-height:4.0px;letter-spacing:-0.640px;white-space:pre;-webkit-text-stroke-width:0.25px">        <span style="color:#755f30">strcat</span><span style="color:#733c1d">(</span><span style="color:#03107b">newPath</span><span style="color:#000000">,</span> <span style="color:#03107b">node</span><span style="color:#000000">-</span><span style="color:#000000">&gt;</span><span style="color:#03107b">name</span><span style="color:#733c1d">)</span><span style="color:#000000">;</span></div><div style="position:absolute;left:3185px;top:681.10px;font-family:'Liberation Mono', monospace;font-size:4.4px;line-height:4.0px;letter-spacing:-0.640px;white-space:pre;-webkit-text-stroke-width:0.25px">    <span style="color:#4e913f">}</span></div><div style="position:absolute;left:3185px;top:685.10px;font-family:'Liberation Mono', monospace;font-size:4.4px;line-height:4.0px;letter-spacing:-0.640px;white-space:pre;-webkit-text-stroke-width:0.25px">    <span style="color:#755f30">fprintf</span><span style="color:#4e913f">(</span><span style="color:#0000f5">stderr</span><span style="color:#000000">,</span> <span style="color:#95261f">&quot;</span><span style="color:#03107b">%lu</span><span style="color:#95261f">&quot;</span><span style="color:#000000">,</span> <span style="color:#755f30">strlen</span><span style="color:#733c1d">(</span><span style="color:#03107b">newPath</span><span style="color:#733c1d">)</span><span style="color:#4e913f">)</span><span style="color:#000000">;</span></div><div style="position:absolute;left:3185px;top:689.10px;font-family:'Liberation Mono', monospace;font-size:4.4px;line-height:4.0px;letter-spacing:-0.640px;white-space:pre;-webkit-text-stroke-width:0.25px">    <span style="color:#a020d3">if</span> <span style="color:#4e913f">(</span><span style="color:#03107b">node</span><span style="color:#000000">-</span><span style="color:#000000">&gt;</span><span style="color:#03107b">type</span> <span style="color:#000000">=</span><span style="color:#000000">=</span> <span style="color:#2f6ebb">DIRECTORY_TYPE</span><span style="color:#4e913f">)</span><span style="color:#4e913f">{</span></div><div style="position:absolute;left:3185px;top:693.10px;font-family:'Liberation Mono', monospace;font-size:4.4px;line-height:4.0px;letter-spacing:-0.640px;white-space:pre;-webkit-text-stroke-width:0.25px">        <span style="color:#417d96">directory_node_t</span> <span style="color:#000000">*</span><span style="color:#03107b">curr</span> <span style="color:#000000">=</span> <span style="color:#733c1d">(</span><span style="color:#417d96">directory_node_t</span> <span style="color:#000000">*</span><span style="color:#733c1d">)</span><span style="color:#03107b">node</span><span style="color:#000000">;</span></div><div style="position:absolute;left:3185px;top:697.10px;font-family:'Liberation Mono', monospace;font-size:4.4px;line-height:4.0px;letter-spacing:-0.640px;white-space:pre;-webkit-text-stroke-width:0.25px">        <span style="color:#417d96">mode_t</span> <span style="color:#03107b">mode</span> <span style="color:#000000">=</span> <span style="color:#3c845c">0777</span><span style="color:#000000">;</span></div><div style="position:absolute;left:3185px;top:701.10px;font-family:'Liberation Mono', monospace;font-size:4.4px;line-height:4.0px;letter-spacing:-0.640px;white-space:pre;-webkit-text-stroke-width:0.25px">        <span style="color:#0000f5">assert</span><span style="color:#733c1d">(</span><span style="color:#755f30">mkdir</span><span style="color:#1330f0">(</span><span style="color:#03107b">newPath</span><span style="color:#000000">,</span> <span style="color:#03107b">mode</span><span style="color:#1330f0">)</span> <span style="color:#000000">=</span><span style="color:#000000">=</span> <span style="color:#3c845c">0</span><span style="color:#733c1d">)</span><span style="color:#000000">;</span></div><div style="position:absolute;left:3185px;top:705.10px;font-family:'Liberation Mono', monospace;font-size:4.4px;line-height:4.0px;letter-spacing:-0.640px;white-space:pre;-webkit-text-stroke-width:0.25px">        <span style="color:#a020d3">for</span> <span style="color:#733c1d">(</span><span style="color:#417d96">size_t</span> <span style="color:#03107b">i</span> <span style="color:#000000">=</span> <span style="color:#3c845c">0</span><span style="color:#000000">;</span> <span style="color:#03107b">i</span> <span style="color:#000000">&lt;</span> <span style="color:#03107b">curr</span><span style="color:#000000">-</span><span style="color:#000000">&gt;</span><span style="color:#03107b">num_children</span><span style="color:#000000">;</span> <span style="color:#03107b">i</span><span style="color:#000000">+</span><span style="color:#000000">+</span><span style="color:#733c1d">)</span><span style="color:#733c1d">{</span></div><div style="position:absolute;left:3185px;top:709.10px;font-family:'Liberation Mono', monospace;font-size:4.4px;line-height:4.0px;letter-spacing:-0.640px;white-space:pre;-webkit-text-stroke-width:0.25px">            <span style="color:#755f30">create_this_directory</span><span style="color:#1330f0">(</span><span style="color:#03107b">curr</span><span style="color:#000000">-</span><span style="color:#000000">&gt;</span><span style="color:#03107b">children</span><span style="color:#4e913f">[</span><span style="color:#03107b">i</span><span style="color:#4e913f">]</span><span style="color:#000000">,</span> <span style="color:#03107b">newPath</span><span style="color:#1330f0">)</span><span style="color:#000000">;</span></div><div style="position:absolute;left:3185px;top:713.10px;font-family:'Liberation Mono', monospace;font-size:4.4px;line-height:4.0px;letter-spacing:-0.640px;white-space:pre;-webkit-text-stroke-width:0.25px">        <span style="color:#733c1d">}</span></div><div style="position:absolute;left:3185px;top:717.10px;font-family:'Liberation Mono', monospace;font-size:4.4px;line-height:4.0px;letter-spacing:-0.640px;white-space:pre;-webkit-text-stroke-width:0.25px">    <span style="color:#4e913f">}</span></div><div style="position:absolute;left:3185px;top:721.10px;font-family:'Liberation Mono', monospace;font-size:4.4px;line-height:4.0px;letter-spacing:-0.640px;white-space:pre;-webkit-text-stroke-width:0.25px">    <span style="color:#a020d3">if</span> <span style="color:#4e913f">(</span><span style="color:#03107b">node</span><span style="color:#000000">-</span><span style="color:#000000">&gt;</span><span style="color:#03107b">type</span> <span style="color:#000000">=</span><span style="color:#000000">=</span> <span style="color:#2f6ebb">FILE_TYPE</span><span style="color:#4e913f">)</span><span style="color:#4e913f">{</span></div><div style="position:absolute;left:3185px;top:725.10px;font-family:'Liberation Mono', monospace;font-size:4.4px;line-height:4.0px;letter-spacing:-0.640px;white-space:pre;-webkit-text-stroke-width:0.25px">        <span style="color:#417d96">file_node_t</span> <span style="color:#000000">*</span><span style="color:#03107b">curr</span> <span style="color:#000000">=</span> <span style="color:#733c1d">(</span><span style="color:#417d96">file_node_t</span> <span style="color:#000000">*</span><span style="color:#733c1d">)</span><span style="color:#03107b">node</span><span style="color:#000000">;</span></div><div style="position:absolute;left:3185px;top:729.10px;font-family:'Liberation Mono', monospace;font-size:4.4px;line-height:4.0px;letter-spacing:-0.640px;white-space:pre;-webkit-text-stroke-width:0.25px">        <span style="color:#417d96">FILE</span> <span style="color:#000000">*</span><span style="color:#03107b">file</span> <span style="color:#000000">=</span> <span style="color:#755f30">fopen</span><span style="color:#733c1d">(</span><span style="color:#03107b">newPath</span><span style="color:#000000">,</span> <span style="color:#95261f">&quot;</span><span style="color:#95261f">w</span><span style="color:#95261f">&quot;</span><span style="color:#733c1d">)</span><span style="color:#000000">;</span></div><div style="position:absolute;left:3185px;top:733.10px;font-family:'Liberation Mono', monospace;font-size:4.4px;line-height:4.0px;letter-spacing:-0.640px;white-space:pre;-webkit-text-stroke-width:0.25px">        <span style="color:#0000f5">assert</span><span style="color:#733c1d">(</span><span style="color:#03107b">file</span> <span style="color:#000000">!</span><span style="color:#000000">=</span> <span style="color:#0000f5">NULL</span><span style="color:#733c1d">)</span><span style="color:#000000">;</span></div><div style="position:absolute;left:3185px;top:737.10px;font-family:'Liberation Mono', monospace;font-size:4.4px;line-height:4.0px;letter-spacing:-0.640px;white-space:pre;-webkit-text-stroke-width:0.25px">        <span style="color:#755f30">fwrite</span><span style="color:#733c1d">(</span><span style="color:#03107b">curr</span><span style="color:#000000">-</span><span style="color:#000000">&gt;</span><span style="color:#03107b">contents</span><span style="color:#000000">,</span> <span style="color:#0000f5">sizeof</span><span style="color:#1330f0">(</span><span style="color:#0000f5">char</span><span style="color:#1330f0">)</span><span style="color:#000000">,</span> <span style="color:#3c845c">1</span><span style="color:#000000">,</span> <span style="color:#03107b">file</span><span style="color:#733c1d">)</span><span style="color:#000000">;</span></div><div style="position:absolute;left:3185px;top:741.10px;font-family:'Liberation Mono', monospace;font-size:4.4px;line-height:4.0px;letter-spacing:-0.640px;white-space:pre;-webkit-text-stroke-width:0.25px">        <span style="color:#755f30">fclose</span><span style="color:#733c1d">(</span><span style="color:#03107b">file</span><span style="color:#733c1d">)</span><span style="color:#000000">;</span></div><div style="position:absolute;left:3185px;top:745.10px;font-family:'Liberation Mono', monospace;font-size:4.4px;line-height:4.0px;letter-spacing:-0.640px;white-space:pre;-webkit-text-stroke-width:0.25px">    <span style="color:#4e913f">}</span></div><div style="position:absolute;left:3185px;top:749.10px;font-family:'Liberation Mono', monospace;font-size:4.4px;line-height:4.0px;letter-spacing:-0.640px;white-space:pre;-webkit-text-stroke-width:0.25px">    <span style="color:#755f30">free</span><span style="color:#4e913f">(</span><span style="color:#03107b">slash</span><span style="color:#4e913f">)</span><span style="color:#000000">;</span></div><div style="position:absolute;left:3185px;top:753.10px;font-family:'Liberation Mono', monospace;font-size:4.4px;line-height:4.0px;letter-spacing:-0.640px;white-space:pre;-webkit-text-stroke-width:0.25px">    <span style="color:#755f30">free</span><span style="color:#4e913f">(</span><span style="color:#03107b">newPath</span><span style="color:#4e913f">)</span><span style="color:#000000">;</span></div><div style="position:absolute;left:3185px;top:757.10px;font-family:'Liberation Mono', monospace;font-size:4.4px;line-height:4.0px;letter-spacing:-0.640px;white-space:pre;-webkit-text-stroke-width:0.25px"><span style="color:#1330f0">}</span></div><div style="position:absolute;left:3185px;top:761.10px;font-family:'Liberation Mono', monospace;font-size:4.4px;line-height:4.0px;letter-spacing:-0.640px;white-space:pre;-webkit-text-stroke-width:0.25px"></div><div style="position:absolute;left:3185px;top:765.10px;font-family:'Liberation Mono', monospace;font-size:4.4px;line-height:4.0px;letter-spacing:-0.640px;white-space:pre;-webkit-text-stroke-width:0.25px"><span style="color:#377e22">/**</span></div><div style="position:absolute;left:3185px;top:769.10px;font-family:'Liberation Mono', monospace;font-size:4.4px;line-height:4.0px;letter-spacing:-0.640px;white-space:pre;-webkit-text-stroke-width:0.25px"><span style="color:#377e22"> * Creates all files and directories in a directory tree.</span></div><div style="position:absolute;left:3185px;top:773.10px;font-family:'Liberation Mono', monospace;font-size:4.4px;line-height:4.0px;letter-spacing:-0.640px;white-space:pre;-webkit-text-stroke-width:0.25px"><span style="color:#377e22"> * The files and directories are created relative to the current working directory.</span></div><div style="position:absolute;left:3185px;top:777.10px;font-family:'Liberation Mono', monospace;font-size:4.4px;line-height:4.0px;letter-spacing:-0.640px;white-space:pre;-webkit-text-stroke-width:0.25px"><span style="color:#377e22"> *</span></div><div style="position:absolute;left:3185px;top:781.10px;font-family:'Liberation Mono', monospace;font-size:4.4px;line-height:4.0px;letter-spacing:-0.640px;white-space:pre;-webkit-text-stroke-width:0.25px"><span style="color:#377e22"> * @param node the root of the directory tree. You may assume this is a directory node.</span></div><div style="position:absolute;left:3185px;top:785.10px;font-family:'Liberation Mono', monospace;font-size:4.4px;line-height:4.0px;letter-spacing:-0.640px;white-space:pre;-webkit-text-stroke-width:0.25px"><span style="color:#377e22"> */</span></div><div style="position:absolute;left:3185px;top:789.10px;font-family:'Liberation Mono', monospace;font-size:4.4px;line-height:4.0px;letter-spacing:-0.640px;white-space:pre;-webkit-text-stroke-width:0.25px"><span style="color:#0000f5">void</span> <span style="color:#755f30">create_directory_tree</span><span style="color:#1330f0">(</span><span style="color:#417d96">node_t</span> <span style="color:#000000">*</span><span style="color:#03107b">node</span><span style="color:#1330f0">)</span> <span style="color:#1330f0">{</span></div><div style="position:absolute;left:3185px;top:793.10px;font-family:'Liberation Mono', monospace;font-size:4.4px;line-height:4.0px;letter-spacing:-0.640px;white-space:pre;-webkit-text-stroke-width:0.25px">    <span style="color:#377e22">// (void) node;</span></div><div style="position:absolute;left:3185px;top:797.10px;font-family:'Liberation Mono', monospace;font-size:4.4px;line-height:4.0px;letter-spacing:-0.640px;white-space:pre;-webkit-text-stroke-width:0.25px">    <span style="color:#377e22">// mode_t mode = 0777;</span></div><div style="position:absolute;left:3185px;top:801.10px;font-family:'Liberation Mono', monospace;font-size:4.4px;line-height:4.0px;letter-spacing:-0.640px;white-space:pre;-webkit-text-stroke-width:0.25px">    <span style="color:#377e22">// assert(mkdir(&quot;ROOT&quot;, mode) == 0);</span></div><div style="position:absolute;left:3185px;top:805.10px;font-family:'Liberation Mono', monospace;font-size:4.4px;line-height:4.0px;letter-spacing:-0.640px;white-space:pre;-webkit-text-stroke-width:0.25px">    <span style="color:#377e22">// char *pathName = malloc(sizeof(char) * 5);</span></div><div style="position:absolute;left:3185px;top:809.10px;font-family:'Liberation Mono', monospace;font-size:4.4px;line-height:4.0px;letter-spacing:-0.640px;white-space:pre;-webkit-text-stroke-width:0.25px">    <span style="color:#377e22">// pathName = &quot;ROOT&quot;;</span></div><div style="position:absolute;left:3185px;top:813.10px;font-family:'Liberation Mono', monospace;font-size:4.4px;line-height:4.0px;letter-spacing:-0.640px;white-space:pre;-webkit-text-stroke-width:0.25px">    <span style="color:#0000f5">char</span> <span style="color:#000000">*</span><span style="color:#03107b">path</span> <span style="color:#000000">=</span> <span style="color:#755f30">malloc</span><span style="color:#4e913f">(</span><span style="color:#0000f5">sizeof</span><span style="color:#733c1d">(</span><span style="color:#0000f5">char</span><span style="color:#733c1d">)</span><span style="color:#4e913f">)</span><span style="color:#000000">;</span></div><div style="position:absolute;left:3185px;top:817.10px;font-family:'Liberation Mono', monospace;font-size:4.4px;line-height:4.0px;letter-spacing:-0.640px;white-space:pre;-webkit-text-stroke-width:0.25px">    <span style="color:#03107b">path</span><span style="color:#000000">=</span><span style="color:#95261f">&quot;</span><span style="color:#95261f">&quot;</span><span style="color:#000000">;</span></div><div style="position:absolute;left:3185px;top:821.10px;font-family:'Liberation Mono', monospace;font-size:4.4px;line-height:4.0px;letter-spacing:-0.640px;white-space:pre;-webkit-text-stroke-width:0.25px">    <span style="color:#755f30">create_this_directory</span><span style="color:#4e913f">(</span><span style="color:#03107b">node</span><span style="color:#000000">,</span> <span style="color:#03107b">path</span><span style="color:#4e913f">)</span><span style="color:#000000">;</span></div><div style="position:absolute;left:3185px;top:825.10px;font-family:'Liberation Mono', monospace;font-size:4.4px;line-height:4.0px;letter-spacing:-0.640px;white-space:pre;-webkit-text-stroke-width:0.25px"><span style="color:#1330f0">}</span></div><div style="position:absolute;left:3185px;top:829.10px;font-family:'Liberation Mono', monospace;font-size:4.4px;line-height:4.0px;letter-spacing:-0.640px;white-space:pre;-webkit-text-stroke-width:0.25px"></div><div style="position:absolute;left:3185px;top:833.10px;font-family:'Liberation Mono', monospace;font-size:4.4px;line-height:4.0px;letter-spacing:-0.640px;white-space:pre;-webkit-text-stroke-width:0.25px"><span style="color:#0000f5">void</span> <span style="color:#755f30">free_directory_tree</span><span style="color:#1330f0">(</span><span style="color:#417d96">node_t</span> <span style="color:#000000">*</span><span style="color:#03107b">node</span><span style="color:#1330f0">)</span> <span style="color:#1330f0">{</span></div><div style="position:absolute;left:3185px;top:837.10px;font-family:'Liberation Mono', monospace;font-size:4.4px;line-height:4.0px;letter-spacing:-0.640px;white-space:pre;-webkit-text-stroke-width:0.25px">    <span style="color:#a020d3">if</span> <span style="color:#4e913f">(</span><span style="color:#03107b">node</span><span style="color:#000000">-</span><span style="color:#000000">&gt;</span><span style="color:#03107b">type</span> <span style="color:#000000">=</span><span style="color:#000000">=</span> <span style="color:#2f6ebb">FILE_TYPE</span><span style="color:#4e913f">)</span> <span style="color:#4e913f">{</span></div><div style="position:absolute;left:3185px;top:841.10px;font-family:'Liberation Mono', monospace;font-size:4.4px;line-height:4.0px;letter-spacing:-0.640px;white-space:pre;-webkit-text-stroke-width:0.25px">        <span style="color:#417d96">file_node_t</span> <span style="color:#000000">*</span><span style="color:#03107b">fnode</span> <span style="color:#000000">=</span> <span style="color:#733c1d">(</span><span style="color:#417d96">file_node_t</span> <span style="color:#000000">*</span><span style="color:#733c1d">)</span> <span style="color:#03107b">node</span><span style="color:#000000">;</span></div><div style="position:absolute;left:3185px;top:845.10px;font-family:'Liberation Mono', monospace;font-size:4.4px;line-height:4.0px;letter-spacing:-0.640px;white-space:pre;-webkit-text-stroke-width:0.25px">        <span style="color:#755f30">free</span><span style="color:#733c1d">(</span><span style="color:#03107b">fnode</span><span style="color:#000000">-</span><span style="color:#000000">&gt;</span><span style="color:#03107b">contents</span><span style="color:#733c1d">)</span><span style="color:#000000">;</span></div><div style="position:absolute;left:3185px;top:849.10px;font-family:'Liberation Mono', monospace;font-size:4.4px;line-height:4.0px;letter-spacing:-0.640px;white-space:pre;-webkit-text-stroke-width:0.25px">    <span style="color:#4e913f">}</span></div><div style="position:absolute;left:3185px;top:853.10px;font-family:'Liberation Mono', monospace;font-size:4.4px;line-height:4.0px;letter-spacing:-0.640px;white-space:pre;-webkit-text-stroke-width:0.25px">    <span style="color:#a020d3">else</span> <span style="color:#4e913f">{</span></div><div style="position:absolute;left:3185px;top:857.10px;font-family:'Liberation Mono', monospace;font-size:4.4px;line-height:4.0px;letter-spacing:-0.640px;white-space:pre;-webkit-text-stroke-width:0.25px">        <span style="color:#0000f5">assert</span><span style="color:#733c1d">(</span><span style="color:#03107b">node</span><span style="color:#000000">-</span><span style="color:#000000">&gt;</span><span style="color:#03107b">type</span> <span style="color:#000000">=</span><span style="color:#000000">=</span> <span style="color:#2f6ebb">DIRECTORY_TYPE</span><span style="color:#733c1d">)</span><span style="color:#000000">;</span></div><div style="position:absolute;left:3185px;top:861.10px;font-family:'Liberation Mono', monospace;font-size:4.4px;line-height:4.0px;letter-spacing:-0.640px;white-space:pre;-webkit-text-stroke-width:0.25px">        <span style="color:#417d96">directory_node_t</span> <span style="color:#000000">*</span><span style="color:#03107b">dnode</span> <span style="color:#000000">=</span> <span style="color:#733c1d">(</span><span style="color:#417d96">directory_node_t</span> <span style="color:#000000">*</span><span style="color:#733c1d">)</span> <span style="color:#03107b">node</span><span style="color:#000000">;</span></div><div style="position:absolute;left:3185px;top:865.10px;font-family:'Liberation Mono', monospace;font-size:4.4px;line-height:4.0px;letter-spacing:-0.640px;white-space:pre;-webkit-text-stroke-width:0.25px">        <span style="color:#a020d3">for</span> <span style="color:#733c1d">(</span><span style="color:#417d96">size_t</span> <span style="color:#03107b">i</span> <span style="color:#000000">=</span> <span style="color:#3c845c">0</span><span style="color:#000000">;</span> <span style="color:#03107b">i</span> <span style="color:#000000">&lt;</span> <span style="color:#03107b">dnode</span><span style="color:#000000">-</span><span style="color:#000000">&gt;</span><span style="color:#03107b">num_children</span><span style="color:#000000">;</span> <span style="color:#03107b">i</span><span style="color:#000000">+</span><span style="color:#000000">+</span><span style="color:#733c1d">)</span> <span style="color:#733c1d">{</span></div><div style="position:absolute;left:3185px;top:869.10px;font-family:'Liberation Mono', monospace;font-size:4.4px;line-height:4.0px;letter-spacing:-0.640px;white-space:pre;-webkit-text-stroke-width:0.25px">            <span style="color:#755f30">free_directory_tree</span><span style="color:#1330f0">(</span><span style="color:#03107b">dnode</span><span style="color:#000000">-</span><span style="color:#000000">&gt;</span><span style="color:#03107b">children</span><span style="color:#4e913f">[</span><span style="color:#03107b">i</span><span style="color:#4e913f">]</span><span style="color:#1330f0">)</span><span style="color:#000000">;</span></div><div style="position:absolute;left:3185px;top:873.10px;font-family:'Liberation Mono', monospace;font-size:4.4px;line-height:4.0px;letter-spacing:-0.640px;white-space:pre;-webkit-text-stroke-width:0.25px">        <span style="color:#733c1d">}</span></div><div style="position:absolute;left:3185px;top:877.10px;font-family:'Liberation Mono', monospace;font-size:4.4px;line-height:4.0px;letter-spacing:-0.640px;white-space:pre;-webkit-text-stroke-width:0.25px">        <span style="color:#755f30">free</span><span style="color:#733c1d">(</span><span style="color:#03107b">dnode</span><span style="color:#000000">-</span><span style="color:#000000">&gt;</span><span style="color:#03107b">children</span><span style="color:#733c1d">)</span><span style="color:#000000">;</span></div><div style="position:absolute;left:3185px;top:881.10px;font-family:'Liberation Mono', monospace;font-size:4.4px;line-height:4.0px;letter-spacing:-0.640px;white-space:pre;-webkit-text-stroke-width:0.25px">    <span style="color:#4e913f">}</span></div><div style="position:absolute;left:3185px;top:885.10px;font-family:'Liberation Mono', monospace;font-size:4.4px;line-height:4.0px;letter-spacing:-0.640px;white-space:pre;-webkit-text-stroke-width:0.25px">    <span style="color:#755f30">free</span><span style="color:#4e913f">(</span><span style="color:#03107b">node</span><span style="color:#000000">-</span><span style="color:#000000">&gt;</span><span style="color:#03107b">name</span><span style="color:#4e913f">)</span><span style="color:#000000">;</span></div><div style="position:absolute;left:3185px;top:889.10px;font-family:'Liberation Mono', monospace;font-size:4.4px;line-height:4.0px;letter-spacing:-0.640px;white-space:pre;-webkit-text-stroke-width:0.25px">    <span style="color:#755f30">free</span><span style="color:#4e913f">(</span><span style="color:#03107b">node</span><span style="color:#4e913f">)</span><span style="color:#000000">;</span></div><div style="position:absolute;left:3185px;top:893.10px;font-family:'Liberation Mono', monospace;font-size:4.4px;line-height:4.0px;letter-spacing:-0.640px;white-space:pre;-webkit-text-stroke-width:0.25px"><span style="color:#1330f0">}</span></div><div style="position:absolute;left:3416.00px;top:238.00px;width:1.20px;height:1382.00px;background:#dedede;"></div><div style="position:absolute;left:3417.00px;top:273.00px;width:13.00px;height:16.00px;background:#9bbf9b;"></div><div style="position:absolute;left:3417.00px;top:504.30px;width:13.00px;height:28.70px;background:#9bbf9b;"></div><div style="position:absolute;left:3417.00px;top:540.00px;width:13.00px;height:94.30px;background:#87b5e0;"></div><div style="position:absolute;left:3417.00px;top:634.30px;width:13.00px;height:230.00px;background:#9bbf9b;"></div><div style="position:absolute;left:3417.00px;top:872.00px;width:13.00px;height:302.50px;background:#87b5e0;"></div><div style="position:absolute;left:3417.00px;top:1188.80px;width:13.00px;height:43.70px;background:#9bbf9b;"></div><div style="position:absolute;left:3417.00px;top:1239.80px;width:13.00px;height:57.40px;background:#87b5e0;"></div><div style="position:absolute;left:3417.00px;top:658.00px;width:13.00px;height:5.00px;background:#6fa08a;"></div><div style="position:absolute;left:3417.00px;top:663.00px;width:13.00px;height:11.60px;background:#87b5e0;"></div><div style="position:absolute;left:3417.00px;top:674.60px;width:13.00px;height:4.00px;background:#6fa08a;"></div><div style="position:absolute;left:3416.00px;top:909.00px;width:40.00px;height:190.00px;background:rgba(100,100,100,0.4);"></div><div style="position:absolute;left:3416.00px;top:985.20px;width:40.00px;height:5.00px;background:#555555;"></div><div style="position:absolute;left:686.40px;top:1659.01px;font-family:'Liberation Sans', sans-serif;font-size:31.68px;line-height:31.68px;color:#717171;font-weight:400;font-style:normal;white-space:pre;-webkit-text-stroke-width:0.4px;letter-spacing:-0.759px;">PROBLEMS</div><div style="position:absolute;left:928.00px;top:1659.01px;font-family:'Liberation Sans', sans-serif;font-size:31.68px;line-height:31.68px;color:#717171;font-weight:400;font-style:normal;white-space:pre;-webkit-text-stroke-width:0.4px;letter-spacing:0.159px;">OUTPUT</div><div style="position:absolute;left:1128.80px;top:1659.01px;font-family:'Liberation Sans', sans-serif;font-size:31.68px;line-height:31.68px;color:#717171;font-weight:400;font-style:normal;white-space:pre;-webkit-text-stroke-width:0.4px;letter-spacing:-0.301px;">DEBUG CONSOLE</div><div style="position:absolute;left:1472.50px;top:1659.01px;font-family:'Liberation Sans', sans-serif;font-size:31.68px;line-height:31.68px;color:#424242;font-weight:400;font-style:normal;white-space:pre;-webkit-text-stroke-width:0.4px;letter-spacing:-0.520px;">TERMINAL</div><div style="position:absolute;left:1700.00px;top:1659.01px;font-family:'Liberation Sans', sans-serif;font-size:31.68px;line-height:31.68px;color:#717171;font-weight:400;font-style:normal;white-space:pre;-webkit-text-stroke-width:0.4px;letter-spacing:-0.562px;">PORTS</div><div style="position:absolute;left:1465.40px;top:1708.50px;width:170.60px;height:3.00px;background:#424242;"></div><svg style="position:absolute;left:0.00px;top:1600.00px;pointer-events:none" width="3456.00" height="240.00" viewBox="0 1600 3456 240"><path d="M2859,1652.5 L2877,1663 L2877,1684 L2859,1694.5 L2841,1684 L2841,1663 Z" fill="none" stroke="#555" stroke-width="1.3"/><path d="M2877,1663 L2877,1684 L2859,1694.5 L2859,1673.5 Z" fill="#3b3b3b"/><path d="M2867,1677.5 Q2863.5,1676.5 2863.5,1680 Q2863.5,1682.5 2866,1683 Q2868.5,1684 2868,1686.5 Q2867,1689 2863.5,1687.5 M2865.8,1675 L2865.8,1690 M2870.5,1687.5 L2875,1685" fill="none" stroke="#fff" stroke-width="1.3"/><path d="M3001,1655.5 L3019,1689.5 L2983,1689.5 Z" fill="none" stroke="#82571c" stroke-width="2.8" stroke-linejoin="round"/><path d="M3001,1666 L3001,1679 M3001,1682 L3001,1686" stroke="#82571c" stroke-width="3.6"/><path d="M3074.6,1654 L3074.6,1690.8 M3055.7,1672.4 L3093.6,1672.4" stroke="#616161" stroke-width="2.8"/><path d="M3112,1669.5 L3121.8,1679.3 L3131.6,1669.5" fill="none" stroke="#616161" stroke-width="2.2"/><rect x="3172.5" y="1655.5" width="34.5" height="34" rx="3" fill="none" stroke="#616161" stroke-width="2.8"/><path d="M3189.7,1655.5 L3189.7,1689.5" stroke="#616161" stroke-width="2.8"/><path d="M3246,1660 L3277.5,1660 M3256.5,1660 L3256.5,1655.5 L3267,1655.5 L3267,1660 M3250,1660 L3251.5,1688 Q3252,1690 3254,1690 L3269.5,1690 Q3271.5,1690 3272,1688 L3273.5,1660 M3256.5,1666 L3256.5,1684 M3261.7,1666 L3261.7,1684 M3267,1666 L3267,1684" fill="none" stroke="#616161" stroke-width="2.6"/><path d="M3324.5,1678 L3338,1664.5 L3351.5,1678" fill="none" stroke="#424242" stroke-width="3"/><path d="M3390,1661 L3413,1684 M3413,1661 L3390,1684" stroke="#424242" stroke-width="3"/><path d="M3314.7,1777 L3333,1811.3 L3296.5,1811.3 Z" fill="none" stroke="#424242" stroke-width="2.8" stroke-linejoin="round"/><path d="M3314.7,1788 L3314.7,1801 M3314.7,1804 L3314.7,1807.5" stroke="#424242" stroke-width="3"/></svg><div style="position:absolute;left:2895.90px;top:1659.41px;font-family:'Liberation Sans', sans-serif;font-size:31.68px;line-height:31.68px;color:#82571c;font-weight:400;font-style:normal;white-space:pre;-webkit-text-stroke-width:0.4px;letter-spacing:-0.096px;">bash</div><div style="position:absolute;left:684.00px;top:1761.15px;font-family:'Liberation Mono', monospace;font-size:37.0px;line-height:37.0px;color:#333333;font-weight:400;font-style:normal;white-space:pre;-webkit-text-stroke-width:0.5px;letter-spacing:-2.203px;">ROOT</div><div style="position:absolute;left:684.00px;top:1801.81px;font-family:'Liberation Mono', monospace;font-size:37.0px;line-height:37.0px;color:#333333;font-weight:400;font-style:normal;white-space:pre;-webkit-text-stroke-width:0.5px;letter-spacing:-2.203px;">Length 6</div><div style="position:absolute;left:684.00px;top:1842.47px;font-family:'Liberation Mono', monospace;font-size:37.0px;line-height:37.0px;color:#333333;font-weight:400;font-style:normal;white-space:pre;-webkit-text-stroke-width:0.5px;letter-spacing:-2.203px;">=================================================================</div><div style="position:absolute;left:684.00px;top:1883.13px;font-family:'Liberation Mono', monospace;font-size:37.0px;line-height:37.0px;color:#c63737;font-weight:700;font-style:normal;white-space:pre;letter-spacing:-2.203px;">==3631299==ERROR: AddressSanitizer: heap-buffer-overflow on address 0x60200000059b at pc 0x000000439bab bp 0x7ffd1d4353a0 sp 0x7ffd1d43</div><div style="position:absolute;left:684.00px;top:1923.79px;font-family:'Liberation Mono', monospace;font-size:37.0px;line-height:37.0px;color:#c63737;font-weight:700;font-style:normal;white-space:pre;letter-spacing:-2.203px;">4b28</div><div style="position:absolute;left:684.00px;top:1964.45px;font-family:'Liberation Mono', monospace;font-size:37.0px;line-height:37.0px;color:#1451a3;font-weight:700;font-style:normal;white-space:pre;letter-spacing:-2.203px;">READ of size 12 at 0x60200000059b thread T0</div><div style="position:absolute;left:684.0px;top:2005.11px;font-family:'Liberation Mono', monospace;font-size:37.0px;line-height:37.0px;color:#333333;letter-spacing:-2.203px;white-space:pre;-webkit-text-stroke-width:0.5px">    #0 0x439baa in printf_common(void<span style="position:relative;color:transparent">*<svg style="position:absolute;left:0.0px;top:9.8px;overflow:visible" width="20" height="20" viewBox="0 0 20 20"><path d="M10,0.5 L10,19.5 M1.8,5.25 L18.2,14.75 M1.8,14.75 L18.2,5.25" stroke="#333333" stroke-width="2.5"/></svg></span>, char const<span style="position:relative;color:transparent">*<svg style="position:absolute;left:0.0px;top:9.8px;overflow:visible" width="20" height="20" viewBox="0 0 20 20"><path d="M10,0.5 L10,19.5 M1.8,5.25 L18.2,14.75 M1.8,14.75 L18.2,5.25" stroke="#333333" stroke-width="2.5"/></svg></span>, __va_list_tag<span style="position:relative;color:transparent">*<svg style="position:absolute;left:0.0px;top:9.8px;overflow:visible" width="20" height="20" viewBox="0 0 20 20"><path d="M10,0.5 L10,19.5 M1.8,5.25 L18.2,14.75 M1.8,14.75 L18.2,5.25" stroke="#333333" stroke-width="2.5"/></svg></span>) (/home/mli5/cs24/pretest-mli5/bin/test_tree+0x439baa)</div><div style="position:absolute;left:684.00px;top:2045.77px;font-family:'Liberation Mono', monospace;font-size:37.0px;line-height:37.0px;color:#333333;font-weight:400;font-style:normal;white-space:pre;-webkit-text-stroke-width:0.5px;letter-spacing:-2.203px;">    #1 0x43b02f in fprintf (/home/mli5/cs24/pretest-mli5/bin/test_tree+0x43b02f)</div><div style="position:absolute;left:684.00px;top:2086.43px;font-family:'Liberation Mono', monospace;font-size:37.0px;line-height:37.0px;color:#333333;font-weight:400;font-style:normal;white-space:pre;-webkit-text-stroke-width:0.5px;letter-spacing:-2.203px;">    #2 0x4c6370 in create_this_directory /home/mli5/cs24/pretest-mli5/src/directory_tree.c:102:5</div><div style="position:absolute;left:684.00px;top:2127.09px;font-family:'Liberation Mono', monospace;font-size:37.0px;line-height:37.0px;color:#333333;font-weight:400;font-style:normal;white-space:pre;-webkit-text-stroke-width:0.5px;letter-spacing:-2.203px;">    #3 0x4c6f44 in create_directory_tree /home/mli5/cs24/pretest-mli5/src/directory_tree.c:147:5</div><div style="position:absolute;left:79.10px;top:2187.12px;font-family:'Liberation Sans', sans-serif;font-size:34.56px;line-height:34.56px;color:#ffffff;font-weight:400;font-style:normal;white-space:pre;-webkit-text-stroke-width:0.4px;letter-spacing:0.852px;">SSH: labradoodle.caltech.edu</div><div style="position:absolute;left:664.00px;top:2187.12px;font-family:'Liberation Sans', sans-serif;font-size:34.56px;line-height:34.56px;color:#ffffff;font-weight:400;font-style:normal;white-space:pre;-webkit-text-stroke-width:0.4px;letter-spacing:1.061px;">master*</div><div style="position:absolute;left:974.80px;top:2187.12px;font-family:'Liberation Sans', sans-serif;font-size:34.56px;line-height:34.56px;color:#ffffff;font-weight:400;font-style:normal;white-space:pre;-webkit-text-stroke-width:0.4px;letter-spacing:-0.019px;">0</div><div style="position:absolute;left:1056.70px;top:2187.12px;font-family:'Liberation Sans', sans-serif;font-size:34.56px;line-height:34.56px;color:#ffffff;font-weight:400;font-style:normal;white-space:pre;-webkit-text-stroke-width:0.4px;letter-spacing:-1.219px;">0</div><div style="position:absolute;left:1172.90px;top:2187.12px;font-family:'Liberation Sans', sans-serif;font-size:34.56px;line-height:34.56px;color:#ffffff;font-weight:400;font-style:normal;white-space:pre;-webkit-text-stroke-width:0.4px;letter-spacing:0.881px;">0</div><div style="position:absolute;left:1288.00px;top:2187.12px;font-family:'Liberation Sans', sans-serif;font-size:34.56px;line-height:34.56px;color:#ffffff;font-weight:400;font-style:normal;white-space:pre;-webkit-text-stroke-width:0.4px;letter-spacing:0.648px;">Live Share</div><div style="position:absolute;left:2157.50px;top:2187.12px;font-family:'Liberation Sans', sans-serif;font-size:34.56px;line-height:34.56px;color:#ffffff;font-weight:400;font-style:normal;white-space:pre;-webkit-text-stroke-width:0.4px;letter-spacing:0.668px;">Ln 105, Col 9 (21 selected)</div><div style="position:absolute;left:2638.40px;top:2187.12px;font-family:'Liberation Sans', sans-serif;font-size:34.56px;line-height:34.56px;color:#ffffff;font-weight:400;font-style:normal;white-space:pre;-webkit-text-stroke-width:0.4px;letter-spacing:0.757px;">Spaces: 4</div><div style="position:absolute;left:2846.20px;top:2187.12px;font-family:'Liberation Sans', sans-serif;font-size:34.56px;line-height:34.56px;color:#ffffff;font-weight:400;font-style:normal;white-space:pre;-webkit-text-stroke-width:0.4px;letter-spacing:1.656px;">UTF-8</div><div style="position:absolute;left:2997.50px;top:2187.12px;font-family:'Liberation Sans', sans-serif;font-size:34.56px;line-height:34.56px;color:#ffffff;font-weight:400;font-style:normal;white-space:pre;-webkit-text-stroke-width:0.4px;letter-spacing:-1.828px;">LF</div><div style="position:absolute;left:3083.40px;top:2187.12px;font-family:'Liberation Sans', sans-serif;font-size:34.56px;line-height:34.56px;color:#ffffff;font-weight:400;font-style:normal;white-space:pre;-webkit-text-stroke-width:0.4px;letter-spacing:-1.853px;">C</div><div style="position:absolute;left:3154.00px;top:2187.12px;font-family:'Liberation Sans', sans-serif;font-size:34.56px;line-height:34.56px;color:#ffffff;font-weight:400;font-style:normal;white-space:pre;-webkit-text-stroke-width:0.4px;letter-spacing:0.677px;">Linux</div><svg style="position:absolute;left:0.00px;top:2150.00px;pointer-events:none" width="3456.00" height="84.00" viewBox="0 2150 3456 84"><g transform="translate(0,5)"><path d="M37,2208 L48,2197.5 L37,2187 M61,2175.5 L50.5,2186 L61,2196.5" fill="none" stroke="#ffffff" stroke-width="2.6"/><circle cx="622" cy="2181" r="5" fill="none" stroke="#ffffff" stroke-width="2.6"/><circle cx="622" cy="2210.5" r="5" fill="none" stroke="#ffffff" stroke-width="2.6"/><circle cx="642.5" cy="2188.5" r="5" fill="none" stroke="#ffffff" stroke-width="2.6"/><path d="M622,2186 L622,2205.5 M622,2204 Q624,2197 634,2197 Q642,2196.5 642.5,2193.5" fill="none" stroke="#ffffff" stroke-width="2.6"/><path d="M843,2197 A14,14 0 0,1 870.5,2193.5 M871,2202 A14,14 0 0,1 843.5,2205.5" fill="none" stroke="#ffffff" stroke-width="2.6"/><path d="M863.5,2191.5 L870.8,2198.5 L877,2190 M837.5,2209 L843.2,2200.5 L850.5,2207" fill="none" stroke="#ffffff" stroke-width="2.6"/><circle cx="943" cy="2197" r="15.5" fill="none" stroke="#ffffff" stroke-width="2.6"/><path d="M936,2190 L950,2204 M950,2190 L936,2204" stroke="#ffffff" stroke-width="2.6"/><path d="M1025,2180 L1041.5,2213 L1008.5,2213 Z" fill="none" stroke="#ffffff" stroke-width="2.6" stroke-linejoin="round"/><path d="M1025,2191 L1025,2203 M1025,2206 L1025,2209.5" stroke="#ffffff" stroke-width="2.8"/><circle cx="1144.5" cy="2191" r="3.5" fill="none" stroke="#ffffff" stroke-width="2.4"/><path d="M1144.5,2195 L1136,2213.5 M1144.5,2195 L1153,2213.5 M1139.5,2205 L1149.5,2205 M1137,2183.5 A11,11 0 0,0 1137,2198.5 M1152,2183.5 A11,11 0 0,1 1152,2198.5 M1131.5,2179 A17,17 0 0,0 1131.5,2203 M1157.5,2179 A17,17 0 0,1 1157.5,2203" fill="none" stroke="#ffffff" stroke-width="2.4"/><path d="M1243,2202 C1244,2191 1251,2186 1264,2186 L1264,2180 L1278,2190 L1264,2200 L1264,2194 C1255,2194 1248,2196 1243,2202 Z" fill="none" stroke="#ffffff" stroke-width="2.6" stroke-linejoin="round"/><circle cx="1257" cy="2209" r="6" fill="none" stroke="#ffffff" stroke-width="2.6"/><circle cx="3299" cy="2193" r="6.5" fill="none" stroke="#ffffff" stroke-width="2.6"/><path d="M3289,2214 Q3290,2202 3299,2202 Q3306,2202 3308,2208 M3309,2182 L3324,2182 L3324,2195 L3316,2195 L3312,2199 L3312,2195" fill="none" stroke="#ffffff" stroke-width="2.6"/><path d="M3378,2208 L3381,2204 L3381,2194 Q3381,2182 3392.5,2182 Q3404,2182 3404,2194 L3404,2204 L3407,2208 Z M3388,2212 Q3392.5,2217 3397,2212" fill="none" stroke="#ffffff" stroke-width="2.6" stroke-linejoin="round"/></g></svg></body></html>
